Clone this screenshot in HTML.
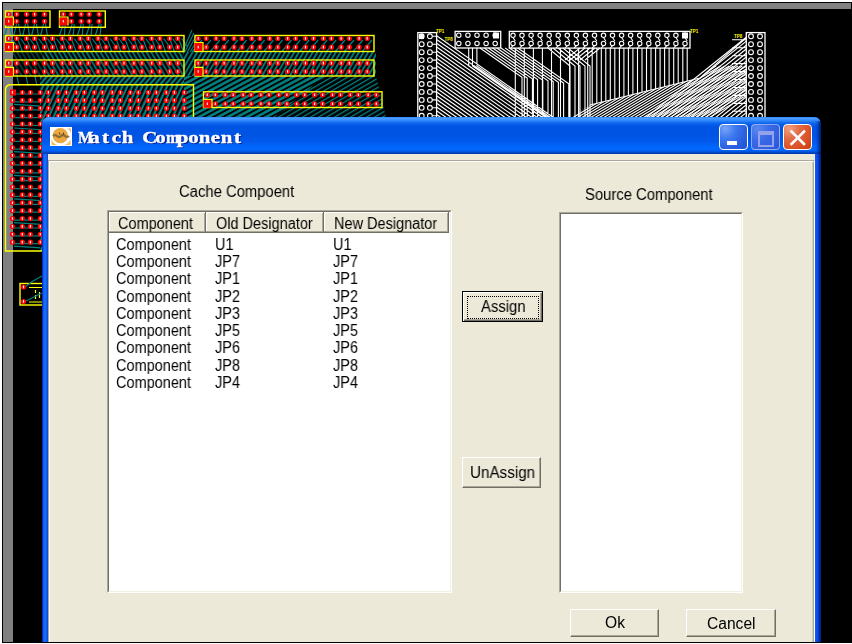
<!DOCTYPE html>
<html><head><meta charset="utf-8"><style>
html,body{margin:0;padding:0;}
body{width:852px;height:644px;position:relative;overflow:hidden;background:#fff;font-family:"Liberation Sans",sans-serif;}
#scr{position:absolute;left:2px;top:2px;width:850px;height:641px;background:#000;}
#clip{position:absolute;left:3px;top:3px;width:848px;height:639px;overflow:hidden;}
#clip>*{position:absolute;}
.p{position:absolute;}
.btn{box-sizing:border-box;background:#ece9d8;border-style:solid;border-width:1px;border-color:#fff #716f64 #716f64 #fff;box-shadow:inset -1px -1px 0 #aca899;}
.btn.def{border-color:#000;box-shadow:inset 1px 1px 0 #fff,inset -1px -1px 0 #716f64,inset -2px -2px 0 #aca899;}
.foc{position:absolute;box-sizing:border-box;border:1px dotted #000;}
.tb{box-sizing:border-box;border:1px solid #fff;border-radius:4px;}
.t{position:absolute;white-space:nowrap;line-height:1;color:#000;transform-origin:0 0;will-change:transform;}
</style></head><body>
<div id="scr"></div>
<div id="clip">
 <div style="left:-3px;top:-3px;width:852px;height:644px;">
  <div class="p" style="left:3px;top:3px;width:848px;height:6px;background:#808080"></div>
  <div class="p" style="left:3px;top:3px;width:10px;height:639px;background:#808080"></div>
  <svg class="p" style="left:0;top:0" width="852" height="644" viewBox="0 0 852 644"><defs><pattern id="hb" width="4" height="4" patternUnits="userSpaceOnUse" patternTransform="rotate(-30)"><rect width="4" height="4" fill="#000"/><rect width="1.8" height="4" fill="#008080"/></pattern>
<pattern id="hf" width="4" height="4" patternUnits="userSpaceOnUse" patternTransform="rotate(30)"><rect width="4" height="4" fill="#000"/><rect width="1.8" height="4" fill="#008080"/></pattern>
<pattern id="hf2" width="4.5" height="4.5" patternUnits="userSpaceOnUse" patternTransform="rotate(62)"><rect width="5" height="5" fill="#008080"/><rect width="1.9" height="5" fill="#000"/></pattern>
<pattern id="hf3" width="4" height="4" patternUnits="userSpaceOnUse" patternTransform="rotate(60)"><rect width="4" height="4" fill="#000"/><rect width="1.3" height="4" fill="#008080"/></pattern>
<pattern id="hs" width="4" height="4" patternUnits="userSpaceOnUse" patternTransform="rotate(40)"><rect width="4" height="4" fill="#000"/><rect width="2.2" height="4" fill="#008080"/></pattern>
<pattern id="hg" width="4.5" height="4.5" patternUnits="userSpaceOnUse" patternTransform="rotate(25)"><rect width="4.5" height="4.5" fill="#008080"/><rect width="2.3" height="4.5" fill="#000"/></pattern>
<pattern id="hw" width="4" height="4" patternUnits="userSpaceOnUse" patternTransform="rotate(-40)"><rect width="4" height="4" fill="#000"/><rect width="1.1" height="4" fill="#fff"/></pattern>
<pattern id="hw2" width="4" height="4" patternUnits="userSpaceOnUse" patternTransform="rotate(38)"><rect width="4" height="4" fill="#000"/><rect width="1.1" height="4" fill="#fff"/></pattern>
<clipPath id="pc"><rect x="3" y="9" width="848" height="633"/></clipPath></defs><g clip-path="url(#pc)"><path d="M9.7 24.0L11.7 36.0M7.7 24.0L4.7 36.0M18.6 24.0L20.6 36.0M16.6 24.0L13.6 36.0M27.6 24.0L29.6 36.0M25.6 24.0L22.6 36.0M36.5 24.0L38.5 36.0M34.5 24.0L31.5 36.0M45.5 24.0L47.5 36.0M43.5 24.0L40.5 36.0M63.3 24.0L59.3 36.0M65.3 24.0L64.3 36.0M72.2 24.0L68.2 36.0M74.2 24.0L73.2 36.0M81.2 24.0L77.2 36.0M83.2 24.0L82.2 36.0M90.1 24.0L86.1 36.0M92.1 24.0L91.1 36.0M99.1 24.0L95.1 36.0M101.1 24.0L100.1 36.0M8.7 38.5L13.7 52.0M11.7 38.5L17.7 47.0M17.6 38.5L22.6 52.0M20.6 38.5L26.6 47.0M26.6 38.5L31.6 52.0M29.6 38.5L35.6 47.0M35.5 38.5L40.5 52.0M38.5 38.5L44.5 47.0M44.5 38.5L49.5 52.0M47.5 38.5L53.5 47.0M53.4 38.5L58.4 52.0M56.4 38.5L62.4 47.0M62.3 38.5L67.3 52.0M65.3 38.5L71.3 47.0M71.3 38.5L76.3 52.0M74.3 38.5L80.3 47.0M80.2 38.5L85.2 52.0M83.2 38.5L89.2 47.0M89.2 38.5L94.2 52.0M92.2 38.5L98.2 47.0M98.1 38.5L103.1 52.0M101.1 38.5L107.1 47.0M107.0 38.5L112.0 52.0M110.0 38.5L116.0 47.0M116.0 38.5L121.0 52.0M119.0 38.5L125.0 47.0M124.9 38.5L129.9 52.0M127.9 38.5L133.9 47.0M133.9 38.5L138.9 52.0M136.9 38.5L142.9 47.0M142.8 38.5L147.8 52.0M145.8 38.5L151.8 47.0M151.7 38.5L156.7 52.0M154.7 38.5L160.7 47.0M160.7 38.5L165.7 52.0M163.7 38.5L169.7 47.0M169.6 38.5L174.6 52.0M172.6 38.5L178.6 47.0M178.6 38.5L183.6 52.0M181.6 38.5L187.6 47.0M202.0 40.0L192.0 52.0M210.9 40.0L200.9 52.0M219.9 40.0L209.9 52.0M228.8 40.0L218.8 52.0M237.8 40.0L227.8 52.0M246.7 40.0L236.7 52.0M255.6 40.0L245.6 52.0M264.6 40.0L254.6 52.0M273.5 40.0L263.5 52.0M282.5 40.0L272.5 52.0M291.4 40.0L281.4 52.0M300.3 40.0L290.3 52.0M309.3 40.0L299.3 52.0M318.2 40.0L308.2 52.0M327.2 40.0L317.2 52.0M336.1 40.0L326.1 52.0M345.0 40.0L335.0 52.0M354.0 40.0L344.0 52.0M362.9 40.0L352.9 52.0M371.9 40.0L361.9 52.0M192.0 30.0L178.0 62.0M194.0 33.0L180.0 62.0M196.0 36.0L182.0 62.0M198.0 39.0L184.0 62.0M200.0 42.0L186.0 62.0M202.0 45.0L188.0 62.0M13.0 94.0L45.0 94.0M13.0 101.9L45.0 101.9M14.0 104.4L45.0 106.4M13.0 109.8L45.0 109.8M13.0 117.6L45.0 117.6M13.0 125.5L45.0 125.5M14.0 128.0L45.0 130.0M13.0 133.4L45.0 133.4M13.0 141.3L45.0 141.3M13.0 149.2L45.0 149.2M14.0 151.7L45.0 153.7M13.0 157.0L45.0 157.0M13.0 164.9L45.0 164.9M13.0 172.8L45.0 172.8M14.0 175.3L45.0 177.3M13.0 180.7L45.0 180.7M13.0 188.6L45.0 188.6M13.0 196.4L45.0 196.4M14.0 198.9L45.0 200.9M13.0 204.3L45.0 204.3M13.0 212.2L45.0 212.2M13.0 220.1L45.0 220.1M14.0 222.6L45.0 224.6M13.0 228.0L45.0 228.0M13.0 235.8L45.0 235.8M13.0 243.7L45.0 243.7M14.0 246.2L45.0 248.2M17.0 76.0L19.0 86.0M26.0 76.0L28.0 86.0M35.0 76.0L37.0 86.0M44.0 76.0L46.0 86.0" stroke="#008080" stroke-width="1.2" fill="none"/><rect x="13" y="52" width="172" height="24" fill="url(#hb)" opacity="0.9"/><rect x="13" y="52" width="30" height="24" fill="#000" opacity="0.45"/><rect x="184" y="52" width="192" height="24" fill="url(#hf)"/><rect x="40" y="76" width="154" height="9" fill="url(#hs)"/><path d="M40 85 L194 85 L194 251 L40 251 Z" fill="url(#hg)"/><path d="M184 76 L325 76 L275 117 L184 117 Z" fill="url(#hf2)"/><path d="M325 76 L376 76 L386 117 L275 117 Z" fill="url(#hf3)"/><rect x="5.5" y="11" width="44.5" height="16.3" fill="none" stroke="#ffff00" stroke-width="1.4"/><rect x="59.5" y="11" width="45.8" height="16.3" fill="none" stroke="#ffff00" stroke-width="1.4"/><rect x="5.5" y="35.5" width="178.5" height="16.0" fill="none" stroke="#ffff00" stroke-width="1.4"/><rect x="195" y="35.5" width="179" height="16.0" fill="none" stroke="#ffff00" stroke-width="1.4"/><rect x="5.5" y="60" width="178.5" height="16" fill="none" stroke="#ffff00" stroke-width="1.4"/><rect x="195" y="60" width="179" height="16" fill="none" stroke="#ffff00" stroke-width="1.4"/><rect x="203.5" y="91.8" width="178.5" height="15.700000000000003" fill="none" stroke="#ffff00" stroke-width="1.4"/><path d="M5.5 251 L5.5 90 Q5.5 84.8 11 84.8 L193.5 84.8 L193.5 251 Z" fill="none" stroke="#ffff00" stroke-width="1.4"/><rect x="20" y="283.5" width="26" height="21.5" fill="none" stroke="#ffff00" stroke-width="1.4"/><path d="M29 287.5 H46 M29 302 H46 M35.5 290 v3 M35.5 295 v4 M39.5 292 v6" stroke="#ffff00" stroke-width="1.2" fill="none"/><path d="M25 287 L33 281 L42 276 M25 301.5 L46 291" stroke="#008080" stroke-width="1.1" fill="none"/><g fill="#ff0000"><circle cx="8.7" cy="14.3" r="2.6"/><circle cx="16.7" cy="14.3" r="2.6"/><circle cx="26.6" cy="14.3" r="2.6"/><circle cx="34.6" cy="14.3" r="2.6"/><circle cx="44.5" cy="14.3" r="2.6"/><circle cx="8.7" cy="21.3" r="2.6"/><circle cx="16.7" cy="21.3" r="2.6"/><circle cx="26.6" cy="21.3" r="2.6"/><circle cx="34.6" cy="21.3" r="2.6"/><circle cx="44.5" cy="21.3" r="2.6"/><circle cx="63.3" cy="14.3" r="2.6"/><circle cx="71.3" cy="14.3" r="2.6"/><circle cx="81.2" cy="14.3" r="2.6"/><circle cx="89.2" cy="14.3" r="2.6"/><circle cx="99.1" cy="14.3" r="2.6"/><circle cx="63.3" cy="21.3" r="2.6"/><circle cx="71.3" cy="21.3" r="2.6"/><circle cx="81.2" cy="21.3" r="2.6"/><circle cx="89.2" cy="21.3" r="2.6"/><circle cx="99.1" cy="21.3" r="2.6"/><circle cx="8.7" cy="38.5" r="2.6"/><circle cx="16.7" cy="38.5" r="2.6"/><circle cx="26.6" cy="38.5" r="2.6"/><circle cx="34.6" cy="38.5" r="2.6"/><circle cx="44.5" cy="38.5" r="2.6"/><circle cx="52.5" cy="38.5" r="2.6"/><circle cx="62.3" cy="38.5" r="2.6"/><circle cx="70.4" cy="38.5" r="2.6"/><circle cx="80.2" cy="38.5" r="2.6"/><circle cx="88.3" cy="38.5" r="2.6"/><circle cx="98.1" cy="38.5" r="2.6"/><circle cx="106.1" cy="38.5" r="2.6"/><circle cx="116.0" cy="38.5" r="2.6"/><circle cx="124.0" cy="38.5" r="2.6"/><circle cx="133.9" cy="38.5" r="2.6"/><circle cx="141.9" cy="38.5" r="2.6"/><circle cx="151.7" cy="38.5" r="2.6"/><circle cx="159.8" cy="38.5" r="2.6"/><circle cx="169.6" cy="38.5" r="2.6"/><circle cx="177.7" cy="38.5" r="2.6"/><circle cx="8.7" cy="47.2" r="2.6"/><circle cx="16.7" cy="47.2" r="2.6"/><circle cx="26.6" cy="47.2" r="2.6"/><circle cx="34.6" cy="47.2" r="2.6"/><circle cx="44.5" cy="47.2" r="2.6"/><circle cx="52.5" cy="47.2" r="2.6"/><circle cx="62.3" cy="47.2" r="2.6"/><circle cx="70.4" cy="47.2" r="2.6"/><circle cx="80.2" cy="47.2" r="2.6"/><circle cx="88.3" cy="47.2" r="2.6"/><circle cx="98.1" cy="47.2" r="2.6"/><circle cx="106.1" cy="47.2" r="2.6"/><circle cx="116.0" cy="47.2" r="2.6"/><circle cx="124.0" cy="47.2" r="2.6"/><circle cx="133.9" cy="47.2" r="2.6"/><circle cx="141.9" cy="47.2" r="2.6"/><circle cx="151.7" cy="47.2" r="2.6"/><circle cx="159.8" cy="47.2" r="2.6"/><circle cx="169.6" cy="47.2" r="2.6"/><circle cx="177.7" cy="47.2" r="2.6"/><circle cx="198.2" cy="38.5" r="2.6"/><circle cx="206.2" cy="38.5" r="2.6"/><circle cx="216.1" cy="38.5" r="2.6"/><circle cx="224.1" cy="38.5" r="2.6"/><circle cx="234.0" cy="38.5" r="2.6"/><circle cx="242.0" cy="38.5" r="2.6"/><circle cx="251.8" cy="38.5" r="2.6"/><circle cx="259.9" cy="38.5" r="2.6"/><circle cx="269.7" cy="38.5" r="2.6"/><circle cx="277.8" cy="38.5" r="2.6"/><circle cx="287.6" cy="38.5" r="2.6"/><circle cx="295.6" cy="38.5" r="2.6"/><circle cx="305.5" cy="38.5" r="2.6"/><circle cx="313.5" cy="38.5" r="2.6"/><circle cx="323.4" cy="38.5" r="2.6"/><circle cx="331.4" cy="38.5" r="2.6"/><circle cx="341.2" cy="38.5" r="2.6"/><circle cx="349.3" cy="38.5" r="2.6"/><circle cx="359.1" cy="38.5" r="2.6"/><circle cx="367.2" cy="38.5" r="2.6"/><circle cx="198.2" cy="47.2" r="2.6"/><circle cx="206.2" cy="47.2" r="2.6"/><circle cx="216.1" cy="47.2" r="2.6"/><circle cx="224.1" cy="47.2" r="2.6"/><circle cx="234.0" cy="47.2" r="2.6"/><circle cx="242.0" cy="47.2" r="2.6"/><circle cx="251.8" cy="47.2" r="2.6"/><circle cx="259.9" cy="47.2" r="2.6"/><circle cx="269.7" cy="47.2" r="2.6"/><circle cx="277.8" cy="47.2" r="2.6"/><circle cx="287.6" cy="47.2" r="2.6"/><circle cx="295.6" cy="47.2" r="2.6"/><circle cx="305.5" cy="47.2" r="2.6"/><circle cx="313.5" cy="47.2" r="2.6"/><circle cx="323.4" cy="47.2" r="2.6"/><circle cx="331.4" cy="47.2" r="2.6"/><circle cx="341.2" cy="47.2" r="2.6"/><circle cx="349.3" cy="47.2" r="2.6"/><circle cx="359.1" cy="47.2" r="2.6"/><circle cx="367.2" cy="47.2" r="2.6"/><circle cx="8.7" cy="63.2" r="2.6"/><circle cx="16.7" cy="63.2" r="2.6"/><circle cx="26.6" cy="63.2" r="2.6"/><circle cx="34.6" cy="63.2" r="2.6"/><circle cx="44.5" cy="63.2" r="2.6"/><circle cx="52.5" cy="63.2" r="2.6"/><circle cx="62.3" cy="63.2" r="2.6"/><circle cx="70.4" cy="63.2" r="2.6"/><circle cx="80.2" cy="63.2" r="2.6"/><circle cx="88.3" cy="63.2" r="2.6"/><circle cx="98.1" cy="63.2" r="2.6"/><circle cx="106.1" cy="63.2" r="2.6"/><circle cx="116.0" cy="63.2" r="2.6"/><circle cx="124.0" cy="63.2" r="2.6"/><circle cx="133.9" cy="63.2" r="2.6"/><circle cx="141.9" cy="63.2" r="2.6"/><circle cx="151.7" cy="63.2" r="2.6"/><circle cx="159.8" cy="63.2" r="2.6"/><circle cx="169.6" cy="63.2" r="2.6"/><circle cx="177.7" cy="63.2" r="2.6"/><circle cx="8.7" cy="71.6" r="2.6"/><circle cx="16.7" cy="71.6" r="2.6"/><circle cx="26.6" cy="71.6" r="2.6"/><circle cx="34.6" cy="71.6" r="2.6"/><circle cx="44.5" cy="71.6" r="2.6"/><circle cx="52.5" cy="71.6" r="2.6"/><circle cx="62.3" cy="71.6" r="2.6"/><circle cx="70.4" cy="71.6" r="2.6"/><circle cx="80.2" cy="71.6" r="2.6"/><circle cx="88.3" cy="71.6" r="2.6"/><circle cx="98.1" cy="71.6" r="2.6"/><circle cx="106.1" cy="71.6" r="2.6"/><circle cx="116.0" cy="71.6" r="2.6"/><circle cx="124.0" cy="71.6" r="2.6"/><circle cx="133.9" cy="71.6" r="2.6"/><circle cx="141.9" cy="71.6" r="2.6"/><circle cx="151.7" cy="71.6" r="2.6"/><circle cx="159.8" cy="71.6" r="2.6"/><circle cx="169.6" cy="71.6" r="2.6"/><circle cx="177.7" cy="71.6" r="2.6"/><circle cx="198.2" cy="63.2" r="2.6"/><circle cx="206.2" cy="63.2" r="2.6"/><circle cx="216.1" cy="63.2" r="2.6"/><circle cx="224.1" cy="63.2" r="2.6"/><circle cx="234.0" cy="63.2" r="2.6"/><circle cx="242.0" cy="63.2" r="2.6"/><circle cx="251.8" cy="63.2" r="2.6"/><circle cx="259.9" cy="63.2" r="2.6"/><circle cx="269.7" cy="63.2" r="2.6"/><circle cx="277.8" cy="63.2" r="2.6"/><circle cx="287.6" cy="63.2" r="2.6"/><circle cx="295.6" cy="63.2" r="2.6"/><circle cx="305.5" cy="63.2" r="2.6"/><circle cx="313.5" cy="63.2" r="2.6"/><circle cx="323.4" cy="63.2" r="2.6"/><circle cx="331.4" cy="63.2" r="2.6"/><circle cx="341.2" cy="63.2" r="2.6"/><circle cx="349.3" cy="63.2" r="2.6"/><circle cx="359.1" cy="63.2" r="2.6"/><circle cx="367.2" cy="63.2" r="2.6"/><circle cx="198.2" cy="71.6" r="2.6"/><circle cx="206.2" cy="71.6" r="2.6"/><circle cx="216.1" cy="71.6" r="2.6"/><circle cx="224.1" cy="71.6" r="2.6"/><circle cx="234.0" cy="71.6" r="2.6"/><circle cx="242.0" cy="71.6" r="2.6"/><circle cx="251.8" cy="71.6" r="2.6"/><circle cx="259.9" cy="71.6" r="2.6"/><circle cx="269.7" cy="71.6" r="2.6"/><circle cx="277.8" cy="71.6" r="2.6"/><circle cx="287.6" cy="71.6" r="2.6"/><circle cx="295.6" cy="71.6" r="2.6"/><circle cx="305.5" cy="71.6" r="2.6"/><circle cx="313.5" cy="71.6" r="2.6"/><circle cx="323.4" cy="71.6" r="2.6"/><circle cx="331.4" cy="71.6" r="2.6"/><circle cx="341.2" cy="71.6" r="2.6"/><circle cx="349.3" cy="71.6" r="2.6"/><circle cx="359.1" cy="71.6" r="2.6"/><circle cx="367.2" cy="71.6" r="2.6"/><circle cx="207.3" cy="94.8" r="2.6"/><circle cx="215.3" cy="94.8" r="2.6"/><circle cx="225.2" cy="94.8" r="2.6"/><circle cx="233.2" cy="94.8" r="2.6"/><circle cx="243.1" cy="94.8" r="2.6"/><circle cx="251.1" cy="94.8" r="2.6"/><circle cx="260.9" cy="94.8" r="2.6"/><circle cx="269.0" cy="94.8" r="2.6"/><circle cx="278.8" cy="94.8" r="2.6"/><circle cx="286.9" cy="94.8" r="2.6"/><circle cx="296.7" cy="94.8" r="2.6"/><circle cx="304.7" cy="94.8" r="2.6"/><circle cx="314.6" cy="94.8" r="2.6"/><circle cx="322.6" cy="94.8" r="2.6"/><circle cx="332.5" cy="94.8" r="2.6"/><circle cx="340.5" cy="94.8" r="2.6"/><circle cx="350.3" cy="94.8" r="2.6"/><circle cx="358.4" cy="94.8" r="2.6"/><circle cx="368.2" cy="94.8" r="2.6"/><circle cx="376.3" cy="94.8" r="2.6"/><circle cx="207.3" cy="103.8" r="2.6"/><circle cx="215.3" cy="103.8" r="2.6"/><circle cx="225.2" cy="103.8" r="2.6"/><circle cx="233.2" cy="103.8" r="2.6"/><circle cx="243.1" cy="103.8" r="2.6"/><circle cx="251.1" cy="103.8" r="2.6"/><circle cx="260.9" cy="103.8" r="2.6"/><circle cx="269.0" cy="103.8" r="2.6"/><circle cx="278.8" cy="103.8" r="2.6"/><circle cx="286.9" cy="103.8" r="2.6"/><circle cx="296.7" cy="103.8" r="2.6"/><circle cx="304.7" cy="103.8" r="2.6"/><circle cx="314.6" cy="103.8" r="2.6"/><circle cx="322.6" cy="103.8" r="2.6"/><circle cx="332.5" cy="103.8" r="2.6"/><circle cx="340.5" cy="103.8" r="2.6"/><circle cx="350.3" cy="103.8" r="2.6"/><circle cx="358.4" cy="103.8" r="2.6"/><circle cx="368.2" cy="103.8" r="2.6"/><circle cx="376.3" cy="103.8" r="2.6"/><circle cx="12.4" cy="92.5" r="2.6"/><circle cx="22.3" cy="92.5" r="2.6"/><circle cx="30.4" cy="92.5" r="2.6"/><circle cx="40.3" cy="92.5" r="2.6"/><circle cx="48.4" cy="92.5" r="2.6"/><circle cx="58.3" cy="92.5" r="2.6"/><circle cx="66.4" cy="92.5" r="2.6"/><circle cx="76.3" cy="92.5" r="2.6"/><circle cx="84.4" cy="92.5" r="2.6"/><circle cx="94.3" cy="92.5" r="2.6"/><circle cx="102.4" cy="92.5" r="2.6"/><circle cx="112.3" cy="92.5" r="2.6"/><circle cx="120.4" cy="92.5" r="2.6"/><circle cx="130.3" cy="92.5" r="2.6"/><circle cx="138.4" cy="92.5" r="2.6"/><circle cx="148.3" cy="92.5" r="2.6"/><circle cx="156.4" cy="92.5" r="2.6"/><circle cx="166.3" cy="92.5" r="2.6"/><circle cx="174.4" cy="92.5" r="2.6"/><circle cx="184.3" cy="92.5" r="2.6"/><circle cx="12.4" cy="100.4" r="2.6"/><circle cx="22.3" cy="100.4" r="2.6"/><circle cx="30.4" cy="100.4" r="2.6"/><circle cx="40.3" cy="100.4" r="2.6"/><circle cx="48.4" cy="100.4" r="2.6"/><circle cx="58.3" cy="100.4" r="2.6"/><circle cx="66.4" cy="100.4" r="2.6"/><circle cx="76.3" cy="100.4" r="2.6"/><circle cx="84.4" cy="100.4" r="2.6"/><circle cx="94.3" cy="100.4" r="2.6"/><circle cx="102.4" cy="100.4" r="2.6"/><circle cx="112.3" cy="100.4" r="2.6"/><circle cx="120.4" cy="100.4" r="2.6"/><circle cx="130.3" cy="100.4" r="2.6"/><circle cx="138.4" cy="100.4" r="2.6"/><circle cx="148.3" cy="100.4" r="2.6"/><circle cx="156.4" cy="100.4" r="2.6"/><circle cx="166.3" cy="100.4" r="2.6"/><circle cx="174.4" cy="100.4" r="2.6"/><circle cx="184.3" cy="100.4" r="2.6"/><circle cx="12.4" cy="108.3" r="2.6"/><circle cx="22.3" cy="108.3" r="2.6"/><circle cx="30.4" cy="108.3" r="2.6"/><circle cx="40.3" cy="108.3" r="2.6"/><circle cx="48.4" cy="108.3" r="2.6"/><circle cx="58.3" cy="108.3" r="2.6"/><circle cx="66.4" cy="108.3" r="2.6"/><circle cx="76.3" cy="108.3" r="2.6"/><circle cx="84.4" cy="108.3" r="2.6"/><circle cx="94.3" cy="108.3" r="2.6"/><circle cx="102.4" cy="108.3" r="2.6"/><circle cx="112.3" cy="108.3" r="2.6"/><circle cx="120.4" cy="108.3" r="2.6"/><circle cx="130.3" cy="108.3" r="2.6"/><circle cx="138.4" cy="108.3" r="2.6"/><circle cx="148.3" cy="108.3" r="2.6"/><circle cx="156.4" cy="108.3" r="2.6"/><circle cx="166.3" cy="108.3" r="2.6"/><circle cx="174.4" cy="108.3" r="2.6"/><circle cx="184.3" cy="108.3" r="2.6"/><circle cx="12.4" cy="116.1" r="2.6"/><circle cx="22.3" cy="116.1" r="2.6"/><circle cx="30.4" cy="116.1" r="2.6"/><circle cx="40.3" cy="116.1" r="2.6"/><circle cx="48.4" cy="116.1" r="2.6"/><circle cx="58.3" cy="116.1" r="2.6"/><circle cx="66.4" cy="116.1" r="2.6"/><circle cx="76.3" cy="116.1" r="2.6"/><circle cx="84.4" cy="116.1" r="2.6"/><circle cx="94.3" cy="116.1" r="2.6"/><circle cx="102.4" cy="116.1" r="2.6"/><circle cx="112.3" cy="116.1" r="2.6"/><circle cx="120.4" cy="116.1" r="2.6"/><circle cx="130.3" cy="116.1" r="2.6"/><circle cx="138.4" cy="116.1" r="2.6"/><circle cx="148.3" cy="116.1" r="2.6"/><circle cx="156.4" cy="116.1" r="2.6"/><circle cx="166.3" cy="116.1" r="2.6"/><circle cx="174.4" cy="116.1" r="2.6"/><circle cx="184.3" cy="116.1" r="2.6"/><circle cx="12.4" cy="124.0" r="2.6"/><circle cx="22.3" cy="124.0" r="2.6"/><circle cx="30.4" cy="124.0" r="2.6"/><circle cx="40.3" cy="124.0" r="2.6"/><circle cx="48.4" cy="124.0" r="2.6"/><circle cx="58.3" cy="124.0" r="2.6"/><circle cx="66.4" cy="124.0" r="2.6"/><circle cx="76.3" cy="124.0" r="2.6"/><circle cx="84.4" cy="124.0" r="2.6"/><circle cx="94.3" cy="124.0" r="2.6"/><circle cx="102.4" cy="124.0" r="2.6"/><circle cx="112.3" cy="124.0" r="2.6"/><circle cx="120.4" cy="124.0" r="2.6"/><circle cx="130.3" cy="124.0" r="2.6"/><circle cx="138.4" cy="124.0" r="2.6"/><circle cx="148.3" cy="124.0" r="2.6"/><circle cx="156.4" cy="124.0" r="2.6"/><circle cx="166.3" cy="124.0" r="2.6"/><circle cx="174.4" cy="124.0" r="2.6"/><circle cx="184.3" cy="124.0" r="2.6"/><circle cx="12.4" cy="131.9" r="2.6"/><circle cx="22.3" cy="131.9" r="2.6"/><circle cx="30.4" cy="131.9" r="2.6"/><circle cx="40.3" cy="131.9" r="2.6"/><circle cx="48.4" cy="131.9" r="2.6"/><circle cx="58.3" cy="131.9" r="2.6"/><circle cx="66.4" cy="131.9" r="2.6"/><circle cx="76.3" cy="131.9" r="2.6"/><circle cx="84.4" cy="131.9" r="2.6"/><circle cx="94.3" cy="131.9" r="2.6"/><circle cx="102.4" cy="131.9" r="2.6"/><circle cx="112.3" cy="131.9" r="2.6"/><circle cx="120.4" cy="131.9" r="2.6"/><circle cx="130.3" cy="131.9" r="2.6"/><circle cx="138.4" cy="131.9" r="2.6"/><circle cx="148.3" cy="131.9" r="2.6"/><circle cx="156.4" cy="131.9" r="2.6"/><circle cx="166.3" cy="131.9" r="2.6"/><circle cx="174.4" cy="131.9" r="2.6"/><circle cx="184.3" cy="131.9" r="2.6"/><circle cx="12.4" cy="139.8" r="2.6"/><circle cx="22.3" cy="139.8" r="2.6"/><circle cx="30.4" cy="139.8" r="2.6"/><circle cx="40.3" cy="139.8" r="2.6"/><circle cx="48.4" cy="139.8" r="2.6"/><circle cx="58.3" cy="139.8" r="2.6"/><circle cx="66.4" cy="139.8" r="2.6"/><circle cx="76.3" cy="139.8" r="2.6"/><circle cx="84.4" cy="139.8" r="2.6"/><circle cx="94.3" cy="139.8" r="2.6"/><circle cx="102.4" cy="139.8" r="2.6"/><circle cx="112.3" cy="139.8" r="2.6"/><circle cx="120.4" cy="139.8" r="2.6"/><circle cx="130.3" cy="139.8" r="2.6"/><circle cx="138.4" cy="139.8" r="2.6"/><circle cx="148.3" cy="139.8" r="2.6"/><circle cx="156.4" cy="139.8" r="2.6"/><circle cx="166.3" cy="139.8" r="2.6"/><circle cx="174.4" cy="139.8" r="2.6"/><circle cx="184.3" cy="139.8" r="2.6"/><circle cx="12.4" cy="147.7" r="2.6"/><circle cx="22.3" cy="147.7" r="2.6"/><circle cx="30.4" cy="147.7" r="2.6"/><circle cx="40.3" cy="147.7" r="2.6"/><circle cx="48.4" cy="147.7" r="2.6"/><circle cx="58.3" cy="147.7" r="2.6"/><circle cx="66.4" cy="147.7" r="2.6"/><circle cx="76.3" cy="147.7" r="2.6"/><circle cx="84.4" cy="147.7" r="2.6"/><circle cx="94.3" cy="147.7" r="2.6"/><circle cx="102.4" cy="147.7" r="2.6"/><circle cx="112.3" cy="147.7" r="2.6"/><circle cx="120.4" cy="147.7" r="2.6"/><circle cx="130.3" cy="147.7" r="2.6"/><circle cx="138.4" cy="147.7" r="2.6"/><circle cx="148.3" cy="147.7" r="2.6"/><circle cx="156.4" cy="147.7" r="2.6"/><circle cx="166.3" cy="147.7" r="2.6"/><circle cx="174.4" cy="147.7" r="2.6"/><circle cx="184.3" cy="147.7" r="2.6"/><circle cx="12.4" cy="155.5" r="2.6"/><circle cx="22.3" cy="155.5" r="2.6"/><circle cx="30.4" cy="155.5" r="2.6"/><circle cx="40.3" cy="155.5" r="2.6"/><circle cx="48.4" cy="155.5" r="2.6"/><circle cx="58.3" cy="155.5" r="2.6"/><circle cx="66.4" cy="155.5" r="2.6"/><circle cx="76.3" cy="155.5" r="2.6"/><circle cx="84.4" cy="155.5" r="2.6"/><circle cx="94.3" cy="155.5" r="2.6"/><circle cx="102.4" cy="155.5" r="2.6"/><circle cx="112.3" cy="155.5" r="2.6"/><circle cx="120.4" cy="155.5" r="2.6"/><circle cx="130.3" cy="155.5" r="2.6"/><circle cx="138.4" cy="155.5" r="2.6"/><circle cx="148.3" cy="155.5" r="2.6"/><circle cx="156.4" cy="155.5" r="2.6"/><circle cx="166.3" cy="155.5" r="2.6"/><circle cx="174.4" cy="155.5" r="2.6"/><circle cx="184.3" cy="155.5" r="2.6"/><circle cx="12.4" cy="163.4" r="2.6"/><circle cx="22.3" cy="163.4" r="2.6"/><circle cx="30.4" cy="163.4" r="2.6"/><circle cx="40.3" cy="163.4" r="2.6"/><circle cx="48.4" cy="163.4" r="2.6"/><circle cx="58.3" cy="163.4" r="2.6"/><circle cx="66.4" cy="163.4" r="2.6"/><circle cx="76.3" cy="163.4" r="2.6"/><circle cx="84.4" cy="163.4" r="2.6"/><circle cx="94.3" cy="163.4" r="2.6"/><circle cx="102.4" cy="163.4" r="2.6"/><circle cx="112.3" cy="163.4" r="2.6"/><circle cx="120.4" cy="163.4" r="2.6"/><circle cx="130.3" cy="163.4" r="2.6"/><circle cx="138.4" cy="163.4" r="2.6"/><circle cx="148.3" cy="163.4" r="2.6"/><circle cx="156.4" cy="163.4" r="2.6"/><circle cx="166.3" cy="163.4" r="2.6"/><circle cx="174.4" cy="163.4" r="2.6"/><circle cx="184.3" cy="163.4" r="2.6"/><circle cx="12.4" cy="171.3" r="2.6"/><circle cx="22.3" cy="171.3" r="2.6"/><circle cx="30.4" cy="171.3" r="2.6"/><circle cx="40.3" cy="171.3" r="2.6"/><circle cx="48.4" cy="171.3" r="2.6"/><circle cx="58.3" cy="171.3" r="2.6"/><circle cx="66.4" cy="171.3" r="2.6"/><circle cx="76.3" cy="171.3" r="2.6"/><circle cx="84.4" cy="171.3" r="2.6"/><circle cx="94.3" cy="171.3" r="2.6"/><circle cx="102.4" cy="171.3" r="2.6"/><circle cx="112.3" cy="171.3" r="2.6"/><circle cx="120.4" cy="171.3" r="2.6"/><circle cx="130.3" cy="171.3" r="2.6"/><circle cx="138.4" cy="171.3" r="2.6"/><circle cx="148.3" cy="171.3" r="2.6"/><circle cx="156.4" cy="171.3" r="2.6"/><circle cx="166.3" cy="171.3" r="2.6"/><circle cx="174.4" cy="171.3" r="2.6"/><circle cx="184.3" cy="171.3" r="2.6"/><circle cx="12.4" cy="179.2" r="2.6"/><circle cx="22.3" cy="179.2" r="2.6"/><circle cx="30.4" cy="179.2" r="2.6"/><circle cx="40.3" cy="179.2" r="2.6"/><circle cx="48.4" cy="179.2" r="2.6"/><circle cx="58.3" cy="179.2" r="2.6"/><circle cx="66.4" cy="179.2" r="2.6"/><circle cx="76.3" cy="179.2" r="2.6"/><circle cx="84.4" cy="179.2" r="2.6"/><circle cx="94.3" cy="179.2" r="2.6"/><circle cx="102.4" cy="179.2" r="2.6"/><circle cx="112.3" cy="179.2" r="2.6"/><circle cx="120.4" cy="179.2" r="2.6"/><circle cx="130.3" cy="179.2" r="2.6"/><circle cx="138.4" cy="179.2" r="2.6"/><circle cx="148.3" cy="179.2" r="2.6"/><circle cx="156.4" cy="179.2" r="2.6"/><circle cx="166.3" cy="179.2" r="2.6"/><circle cx="174.4" cy="179.2" r="2.6"/><circle cx="184.3" cy="179.2" r="2.6"/><circle cx="12.4" cy="187.1" r="2.6"/><circle cx="22.3" cy="187.1" r="2.6"/><circle cx="30.4" cy="187.1" r="2.6"/><circle cx="40.3" cy="187.1" r="2.6"/><circle cx="48.4" cy="187.1" r="2.6"/><circle cx="58.3" cy="187.1" r="2.6"/><circle cx="66.4" cy="187.1" r="2.6"/><circle cx="76.3" cy="187.1" r="2.6"/><circle cx="84.4" cy="187.1" r="2.6"/><circle cx="94.3" cy="187.1" r="2.6"/><circle cx="102.4" cy="187.1" r="2.6"/><circle cx="112.3" cy="187.1" r="2.6"/><circle cx="120.4" cy="187.1" r="2.6"/><circle cx="130.3" cy="187.1" r="2.6"/><circle cx="138.4" cy="187.1" r="2.6"/><circle cx="148.3" cy="187.1" r="2.6"/><circle cx="156.4" cy="187.1" r="2.6"/><circle cx="166.3" cy="187.1" r="2.6"/><circle cx="174.4" cy="187.1" r="2.6"/><circle cx="184.3" cy="187.1" r="2.6"/><circle cx="12.4" cy="194.9" r="2.6"/><circle cx="22.3" cy="194.9" r="2.6"/><circle cx="30.4" cy="194.9" r="2.6"/><circle cx="40.3" cy="194.9" r="2.6"/><circle cx="48.4" cy="194.9" r="2.6"/><circle cx="58.3" cy="194.9" r="2.6"/><circle cx="66.4" cy="194.9" r="2.6"/><circle cx="76.3" cy="194.9" r="2.6"/><circle cx="84.4" cy="194.9" r="2.6"/><circle cx="94.3" cy="194.9" r="2.6"/><circle cx="102.4" cy="194.9" r="2.6"/><circle cx="112.3" cy="194.9" r="2.6"/><circle cx="120.4" cy="194.9" r="2.6"/><circle cx="130.3" cy="194.9" r="2.6"/><circle cx="138.4" cy="194.9" r="2.6"/><circle cx="148.3" cy="194.9" r="2.6"/><circle cx="156.4" cy="194.9" r="2.6"/><circle cx="166.3" cy="194.9" r="2.6"/><circle cx="174.4" cy="194.9" r="2.6"/><circle cx="184.3" cy="194.9" r="2.6"/><circle cx="12.4" cy="202.8" r="2.6"/><circle cx="22.3" cy="202.8" r="2.6"/><circle cx="30.4" cy="202.8" r="2.6"/><circle cx="40.3" cy="202.8" r="2.6"/><circle cx="48.4" cy="202.8" r="2.6"/><circle cx="58.3" cy="202.8" r="2.6"/><circle cx="66.4" cy="202.8" r="2.6"/><circle cx="76.3" cy="202.8" r="2.6"/><circle cx="84.4" cy="202.8" r="2.6"/><circle cx="94.3" cy="202.8" r="2.6"/><circle cx="102.4" cy="202.8" r="2.6"/><circle cx="112.3" cy="202.8" r="2.6"/><circle cx="120.4" cy="202.8" r="2.6"/><circle cx="130.3" cy="202.8" r="2.6"/><circle cx="138.4" cy="202.8" r="2.6"/><circle cx="148.3" cy="202.8" r="2.6"/><circle cx="156.4" cy="202.8" r="2.6"/><circle cx="166.3" cy="202.8" r="2.6"/><circle cx="174.4" cy="202.8" r="2.6"/><circle cx="184.3" cy="202.8" r="2.6"/><circle cx="12.4" cy="210.7" r="2.6"/><circle cx="22.3" cy="210.7" r="2.6"/><circle cx="30.4" cy="210.7" r="2.6"/><circle cx="40.3" cy="210.7" r="2.6"/><circle cx="48.4" cy="210.7" r="2.6"/><circle cx="58.3" cy="210.7" r="2.6"/><circle cx="66.4" cy="210.7" r="2.6"/><circle cx="76.3" cy="210.7" r="2.6"/><circle cx="84.4" cy="210.7" r="2.6"/><circle cx="94.3" cy="210.7" r="2.6"/><circle cx="102.4" cy="210.7" r="2.6"/><circle cx="112.3" cy="210.7" r="2.6"/><circle cx="120.4" cy="210.7" r="2.6"/><circle cx="130.3" cy="210.7" r="2.6"/><circle cx="138.4" cy="210.7" r="2.6"/><circle cx="148.3" cy="210.7" r="2.6"/><circle cx="156.4" cy="210.7" r="2.6"/><circle cx="166.3" cy="210.7" r="2.6"/><circle cx="174.4" cy="210.7" r="2.6"/><circle cx="184.3" cy="210.7" r="2.6"/><circle cx="12.4" cy="218.6" r="2.6"/><circle cx="22.3" cy="218.6" r="2.6"/><circle cx="30.4" cy="218.6" r="2.6"/><circle cx="40.3" cy="218.6" r="2.6"/><circle cx="48.4" cy="218.6" r="2.6"/><circle cx="58.3" cy="218.6" r="2.6"/><circle cx="66.4" cy="218.6" r="2.6"/><circle cx="76.3" cy="218.6" r="2.6"/><circle cx="84.4" cy="218.6" r="2.6"/><circle cx="94.3" cy="218.6" r="2.6"/><circle cx="102.4" cy="218.6" r="2.6"/><circle cx="112.3" cy="218.6" r="2.6"/><circle cx="120.4" cy="218.6" r="2.6"/><circle cx="130.3" cy="218.6" r="2.6"/><circle cx="138.4" cy="218.6" r="2.6"/><circle cx="148.3" cy="218.6" r="2.6"/><circle cx="156.4" cy="218.6" r="2.6"/><circle cx="166.3" cy="218.6" r="2.6"/><circle cx="174.4" cy="218.6" r="2.6"/><circle cx="184.3" cy="218.6" r="2.6"/><circle cx="12.4" cy="226.5" r="2.6"/><circle cx="22.3" cy="226.5" r="2.6"/><circle cx="30.4" cy="226.5" r="2.6"/><circle cx="40.3" cy="226.5" r="2.6"/><circle cx="48.4" cy="226.5" r="2.6"/><circle cx="58.3" cy="226.5" r="2.6"/><circle cx="66.4" cy="226.5" r="2.6"/><circle cx="76.3" cy="226.5" r="2.6"/><circle cx="84.4" cy="226.5" r="2.6"/><circle cx="94.3" cy="226.5" r="2.6"/><circle cx="102.4" cy="226.5" r="2.6"/><circle cx="112.3" cy="226.5" r="2.6"/><circle cx="120.4" cy="226.5" r="2.6"/><circle cx="130.3" cy="226.5" r="2.6"/><circle cx="138.4" cy="226.5" r="2.6"/><circle cx="148.3" cy="226.5" r="2.6"/><circle cx="156.4" cy="226.5" r="2.6"/><circle cx="166.3" cy="226.5" r="2.6"/><circle cx="174.4" cy="226.5" r="2.6"/><circle cx="184.3" cy="226.5" r="2.6"/><circle cx="12.4" cy="234.3" r="2.6"/><circle cx="22.3" cy="234.3" r="2.6"/><circle cx="30.4" cy="234.3" r="2.6"/><circle cx="40.3" cy="234.3" r="2.6"/><circle cx="48.4" cy="234.3" r="2.6"/><circle cx="58.3" cy="234.3" r="2.6"/><circle cx="66.4" cy="234.3" r="2.6"/><circle cx="76.3" cy="234.3" r="2.6"/><circle cx="84.4" cy="234.3" r="2.6"/><circle cx="94.3" cy="234.3" r="2.6"/><circle cx="102.4" cy="234.3" r="2.6"/><circle cx="112.3" cy="234.3" r="2.6"/><circle cx="120.4" cy="234.3" r="2.6"/><circle cx="130.3" cy="234.3" r="2.6"/><circle cx="138.4" cy="234.3" r="2.6"/><circle cx="148.3" cy="234.3" r="2.6"/><circle cx="156.4" cy="234.3" r="2.6"/><circle cx="166.3" cy="234.3" r="2.6"/><circle cx="174.4" cy="234.3" r="2.6"/><circle cx="184.3" cy="234.3" r="2.6"/><circle cx="12.4" cy="242.2" r="2.6"/><circle cx="22.3" cy="242.2" r="2.6"/><circle cx="30.4" cy="242.2" r="2.6"/><circle cx="40.3" cy="242.2" r="2.6"/><circle cx="48.4" cy="242.2" r="2.6"/><circle cx="58.3" cy="242.2" r="2.6"/><circle cx="66.4" cy="242.2" r="2.6"/><circle cx="76.3" cy="242.2" r="2.6"/><circle cx="84.4" cy="242.2" r="2.6"/><circle cx="94.3" cy="242.2" r="2.6"/><circle cx="102.4" cy="242.2" r="2.6"/><circle cx="112.3" cy="242.2" r="2.6"/><circle cx="120.4" cy="242.2" r="2.6"/><circle cx="130.3" cy="242.2" r="2.6"/><circle cx="138.4" cy="242.2" r="2.6"/><circle cx="148.3" cy="242.2" r="2.6"/><circle cx="156.4" cy="242.2" r="2.6"/><circle cx="166.3" cy="242.2" r="2.6"/><circle cx="174.4" cy="242.2" r="2.6"/><circle cx="184.3" cy="242.2" r="2.6"/><circle cx="23.5" cy="287.0" r="2.6"/><circle cx="23.5" cy="301.5" r="2.6"/></g><rect x="5.0" y="17.5" width="8" height="8" fill="#ff0000"/><path d="M5.0 17.0h8.5v8.5" fill="none" stroke="#ffff00" stroke-width="1.2"/><rect x="59.5" y="17.5" width="8" height="8" fill="#ff0000"/><path d="M59.5 17.0h8.5v8.5" fill="none" stroke="#ffff00" stroke-width="1.2"/><rect x="5.0" y="43.0" width="8" height="8" fill="#ff0000"/><path d="M5.0 42.5h8.5v8.5" fill="none" stroke="#ffff00" stroke-width="1.2"/><rect x="194.5" y="43.0" width="8" height="8" fill="#ff0000"/><path d="M194.5 42.5h8.5v8.5" fill="none" stroke="#ffff00" stroke-width="1.2"/><rect x="5.0" y="67.8" width="8" height="8" fill="#ff0000"/><path d="M5.0 67.3h8.5v8.5" fill="none" stroke="#ffff00" stroke-width="1.2"/><rect x="194.5" y="67.8" width="8" height="8" fill="#ff0000"/><path d="M194.5 67.3h8.5v8.5" fill="none" stroke="#ffff00" stroke-width="1.2"/><rect x="203.5" y="99.8" width="8" height="8" fill="#ff0000"/><path d="M203.5 99.3h8.5v8.5" fill="none" stroke="#ffff00" stroke-width="1.2"/><rect x="10" y="89.5" width="6" height="6" fill="#ff0000"/><path d="M8.1 12.9h1.2v2.6h-1.2zM16.1 12.9h1.2v2.6h-1.2zM26.0 12.9h1.2v2.6h-1.2zM34.0 12.9h1.2v2.6h-1.2zM43.9 12.9h1.2v2.6h-1.2zM8.1 19.9h1.2v2.6h-1.2zM16.1 19.9h1.2v2.6h-1.2zM26.0 19.9h1.2v2.6h-1.2zM34.0 19.9h1.2v2.6h-1.2zM43.9 19.9h1.2v2.6h-1.2zM62.7 12.9h1.2v2.6h-1.2zM70.7 12.9h1.2v2.6h-1.2zM80.6 12.9h1.2v2.6h-1.2zM88.6 12.9h1.2v2.6h-1.2zM98.5 12.9h1.2v2.6h-1.2zM62.7 19.9h1.2v2.6h-1.2zM70.7 19.9h1.2v2.6h-1.2zM80.6 19.9h1.2v2.6h-1.2zM88.6 19.9h1.2v2.6h-1.2zM98.5 19.9h1.2v2.6h-1.2zM8.1 37.1h1.2v2.6h-1.2zM16.1 37.1h1.2v2.6h-1.2zM26.0 37.1h1.2v2.6h-1.2zM34.0 37.1h1.2v2.6h-1.2zM43.9 37.1h1.2v2.6h-1.2zM51.9 37.1h1.2v2.6h-1.2zM61.7 37.1h1.2v2.6h-1.2zM69.8 37.1h1.2v2.6h-1.2zM79.6 37.1h1.2v2.6h-1.2zM87.7 37.1h1.2v2.6h-1.2zM97.5 37.1h1.2v2.6h-1.2zM105.5 37.1h1.2v2.6h-1.2zM115.4 37.1h1.2v2.6h-1.2zM123.4 37.1h1.2v2.6h-1.2zM133.3 37.1h1.2v2.6h-1.2zM141.3 37.1h1.2v2.6h-1.2zM151.1 37.1h1.2v2.6h-1.2zM159.2 37.1h1.2v2.6h-1.2zM169.0 37.1h1.2v2.6h-1.2zM177.1 37.1h1.2v2.6h-1.2zM8.1 45.8h1.2v2.6h-1.2zM16.1 45.8h1.2v2.6h-1.2zM26.0 45.8h1.2v2.6h-1.2zM34.0 45.8h1.2v2.6h-1.2zM43.9 45.8h1.2v2.6h-1.2zM51.9 45.8h1.2v2.6h-1.2zM61.7 45.8h1.2v2.6h-1.2zM69.8 45.8h1.2v2.6h-1.2zM79.6 45.8h1.2v2.6h-1.2zM87.7 45.8h1.2v2.6h-1.2zM97.5 45.8h1.2v2.6h-1.2zM105.5 45.8h1.2v2.6h-1.2zM115.4 45.8h1.2v2.6h-1.2zM123.4 45.8h1.2v2.6h-1.2zM133.3 45.8h1.2v2.6h-1.2zM141.3 45.8h1.2v2.6h-1.2zM151.1 45.8h1.2v2.6h-1.2zM159.2 45.8h1.2v2.6h-1.2zM169.0 45.8h1.2v2.6h-1.2zM177.1 45.8h1.2v2.6h-1.2zM197.6 37.1h1.2v2.6h-1.2zM205.6 37.1h1.2v2.6h-1.2zM215.5 37.1h1.2v2.6h-1.2zM223.5 37.1h1.2v2.6h-1.2zM233.4 37.1h1.2v2.6h-1.2zM241.4 37.1h1.2v2.6h-1.2zM251.2 37.1h1.2v2.6h-1.2zM259.3 37.1h1.2v2.6h-1.2zM269.1 37.1h1.2v2.6h-1.2zM277.2 37.1h1.2v2.6h-1.2zM287.0 37.1h1.2v2.6h-1.2zM295.0 37.1h1.2v2.6h-1.2zM304.9 37.1h1.2v2.6h-1.2zM312.9 37.1h1.2v2.6h-1.2zM322.8 37.1h1.2v2.6h-1.2zM330.8 37.1h1.2v2.6h-1.2zM340.6 37.1h1.2v2.6h-1.2zM348.7 37.1h1.2v2.6h-1.2zM358.5 37.1h1.2v2.6h-1.2zM366.6 37.1h1.2v2.6h-1.2zM197.6 45.8h1.2v2.6h-1.2zM205.6 45.8h1.2v2.6h-1.2zM215.5 45.8h1.2v2.6h-1.2zM223.5 45.8h1.2v2.6h-1.2zM233.4 45.8h1.2v2.6h-1.2zM241.4 45.8h1.2v2.6h-1.2zM251.2 45.8h1.2v2.6h-1.2zM259.3 45.8h1.2v2.6h-1.2zM269.1 45.8h1.2v2.6h-1.2zM277.2 45.8h1.2v2.6h-1.2zM287.0 45.8h1.2v2.6h-1.2zM295.0 45.8h1.2v2.6h-1.2zM304.9 45.8h1.2v2.6h-1.2zM312.9 45.8h1.2v2.6h-1.2zM322.8 45.8h1.2v2.6h-1.2zM330.8 45.8h1.2v2.6h-1.2zM340.6 45.8h1.2v2.6h-1.2zM348.7 45.8h1.2v2.6h-1.2zM358.5 45.8h1.2v2.6h-1.2zM366.6 45.8h1.2v2.6h-1.2zM8.1 61.8h1.2v2.6h-1.2zM16.1 61.8h1.2v2.6h-1.2zM26.0 61.8h1.2v2.6h-1.2zM34.0 61.8h1.2v2.6h-1.2zM43.9 61.8h1.2v2.6h-1.2zM51.9 61.8h1.2v2.6h-1.2zM61.7 61.8h1.2v2.6h-1.2zM69.8 61.8h1.2v2.6h-1.2zM79.6 61.8h1.2v2.6h-1.2zM87.7 61.8h1.2v2.6h-1.2zM97.5 61.8h1.2v2.6h-1.2zM105.5 61.8h1.2v2.6h-1.2zM115.4 61.8h1.2v2.6h-1.2zM123.4 61.8h1.2v2.6h-1.2zM133.3 61.8h1.2v2.6h-1.2zM141.3 61.8h1.2v2.6h-1.2zM151.1 61.8h1.2v2.6h-1.2zM159.2 61.8h1.2v2.6h-1.2zM169.0 61.8h1.2v2.6h-1.2zM177.1 61.8h1.2v2.6h-1.2zM8.1 70.2h1.2v2.6h-1.2zM16.1 70.2h1.2v2.6h-1.2zM26.0 70.2h1.2v2.6h-1.2zM34.0 70.2h1.2v2.6h-1.2zM43.9 70.2h1.2v2.6h-1.2zM51.9 70.2h1.2v2.6h-1.2zM61.7 70.2h1.2v2.6h-1.2zM69.8 70.2h1.2v2.6h-1.2zM79.6 70.2h1.2v2.6h-1.2zM87.7 70.2h1.2v2.6h-1.2zM97.5 70.2h1.2v2.6h-1.2zM105.5 70.2h1.2v2.6h-1.2zM115.4 70.2h1.2v2.6h-1.2zM123.4 70.2h1.2v2.6h-1.2zM133.3 70.2h1.2v2.6h-1.2zM141.3 70.2h1.2v2.6h-1.2zM151.1 70.2h1.2v2.6h-1.2zM159.2 70.2h1.2v2.6h-1.2zM169.0 70.2h1.2v2.6h-1.2zM177.1 70.2h1.2v2.6h-1.2zM197.6 61.8h1.2v2.6h-1.2zM205.6 61.8h1.2v2.6h-1.2zM215.5 61.8h1.2v2.6h-1.2zM223.5 61.8h1.2v2.6h-1.2zM233.4 61.8h1.2v2.6h-1.2zM241.4 61.8h1.2v2.6h-1.2zM251.2 61.8h1.2v2.6h-1.2zM259.3 61.8h1.2v2.6h-1.2zM269.1 61.8h1.2v2.6h-1.2zM277.2 61.8h1.2v2.6h-1.2zM287.0 61.8h1.2v2.6h-1.2zM295.0 61.8h1.2v2.6h-1.2zM304.9 61.8h1.2v2.6h-1.2zM312.9 61.8h1.2v2.6h-1.2zM322.8 61.8h1.2v2.6h-1.2zM330.8 61.8h1.2v2.6h-1.2zM340.6 61.8h1.2v2.6h-1.2zM348.7 61.8h1.2v2.6h-1.2zM358.5 61.8h1.2v2.6h-1.2zM366.6 61.8h1.2v2.6h-1.2zM197.6 70.2h1.2v2.6h-1.2zM205.6 70.2h1.2v2.6h-1.2zM215.5 70.2h1.2v2.6h-1.2zM223.5 70.2h1.2v2.6h-1.2zM233.4 70.2h1.2v2.6h-1.2zM241.4 70.2h1.2v2.6h-1.2zM251.2 70.2h1.2v2.6h-1.2zM259.3 70.2h1.2v2.6h-1.2zM269.1 70.2h1.2v2.6h-1.2zM277.2 70.2h1.2v2.6h-1.2zM287.0 70.2h1.2v2.6h-1.2zM295.0 70.2h1.2v2.6h-1.2zM304.9 70.2h1.2v2.6h-1.2zM312.9 70.2h1.2v2.6h-1.2zM322.8 70.2h1.2v2.6h-1.2zM330.8 70.2h1.2v2.6h-1.2zM340.6 70.2h1.2v2.6h-1.2zM348.7 70.2h1.2v2.6h-1.2zM358.5 70.2h1.2v2.6h-1.2zM366.6 70.2h1.2v2.6h-1.2zM206.7 93.4h1.2v2.6h-1.2zM214.7 93.4h1.2v2.6h-1.2zM224.6 93.4h1.2v2.6h-1.2zM232.6 93.4h1.2v2.6h-1.2zM242.5 93.4h1.2v2.6h-1.2zM250.5 93.4h1.2v2.6h-1.2zM260.3 93.4h1.2v2.6h-1.2zM268.4 93.4h1.2v2.6h-1.2zM278.2 93.4h1.2v2.6h-1.2zM286.3 93.4h1.2v2.6h-1.2zM296.1 93.4h1.2v2.6h-1.2zM304.1 93.4h1.2v2.6h-1.2zM314.0 93.4h1.2v2.6h-1.2zM322.0 93.4h1.2v2.6h-1.2zM331.9 93.4h1.2v2.6h-1.2zM339.9 93.4h1.2v2.6h-1.2zM349.7 93.4h1.2v2.6h-1.2zM357.8 93.4h1.2v2.6h-1.2zM367.6 93.4h1.2v2.6h-1.2zM375.7 93.4h1.2v2.6h-1.2zM206.7 102.4h1.2v2.6h-1.2zM214.7 102.4h1.2v2.6h-1.2zM224.6 102.4h1.2v2.6h-1.2zM232.6 102.4h1.2v2.6h-1.2zM242.5 102.4h1.2v2.6h-1.2zM250.5 102.4h1.2v2.6h-1.2zM260.3 102.4h1.2v2.6h-1.2zM268.4 102.4h1.2v2.6h-1.2zM278.2 102.4h1.2v2.6h-1.2zM286.3 102.4h1.2v2.6h-1.2zM296.1 102.4h1.2v2.6h-1.2zM304.1 102.4h1.2v2.6h-1.2zM314.0 102.4h1.2v2.6h-1.2zM322.0 102.4h1.2v2.6h-1.2zM331.9 102.4h1.2v2.6h-1.2zM339.9 102.4h1.2v2.6h-1.2zM349.7 102.4h1.2v2.6h-1.2zM357.8 102.4h1.2v2.6h-1.2zM367.6 102.4h1.2v2.6h-1.2zM375.7 102.4h1.2v2.6h-1.2zM11.8 91.1h1.2v2.6h-1.2zM21.7 91.1h1.2v2.6h-1.2zM29.8 91.1h1.2v2.6h-1.2zM39.7 91.1h1.2v2.6h-1.2zM47.8 91.1h1.2v2.6h-1.2zM57.7 91.1h1.2v2.6h-1.2zM65.8 91.1h1.2v2.6h-1.2zM75.7 91.1h1.2v2.6h-1.2zM83.8 91.1h1.2v2.6h-1.2zM93.7 91.1h1.2v2.6h-1.2zM101.8 91.1h1.2v2.6h-1.2zM111.7 91.1h1.2v2.6h-1.2zM119.8 91.1h1.2v2.6h-1.2zM129.7 91.1h1.2v2.6h-1.2zM137.8 91.1h1.2v2.6h-1.2zM147.7 91.1h1.2v2.6h-1.2zM155.8 91.1h1.2v2.6h-1.2zM165.7 91.1h1.2v2.6h-1.2zM173.8 91.1h1.2v2.6h-1.2zM183.7 91.1h1.2v2.6h-1.2zM11.8 99.0h1.2v2.6h-1.2zM21.7 99.0h1.2v2.6h-1.2zM29.8 99.0h1.2v2.6h-1.2zM39.7 99.0h1.2v2.6h-1.2zM47.8 99.0h1.2v2.6h-1.2zM57.7 99.0h1.2v2.6h-1.2zM65.8 99.0h1.2v2.6h-1.2zM75.7 99.0h1.2v2.6h-1.2zM83.8 99.0h1.2v2.6h-1.2zM93.7 99.0h1.2v2.6h-1.2zM101.8 99.0h1.2v2.6h-1.2zM111.7 99.0h1.2v2.6h-1.2zM119.8 99.0h1.2v2.6h-1.2zM129.7 99.0h1.2v2.6h-1.2zM137.8 99.0h1.2v2.6h-1.2zM147.7 99.0h1.2v2.6h-1.2zM155.8 99.0h1.2v2.6h-1.2zM165.7 99.0h1.2v2.6h-1.2zM173.8 99.0h1.2v2.6h-1.2zM183.7 99.0h1.2v2.6h-1.2zM11.8 106.9h1.2v2.6h-1.2zM21.7 106.9h1.2v2.6h-1.2zM29.8 106.9h1.2v2.6h-1.2zM39.7 106.9h1.2v2.6h-1.2zM47.8 106.9h1.2v2.6h-1.2zM57.7 106.9h1.2v2.6h-1.2zM65.8 106.9h1.2v2.6h-1.2zM75.7 106.9h1.2v2.6h-1.2zM83.8 106.9h1.2v2.6h-1.2zM93.7 106.9h1.2v2.6h-1.2zM101.8 106.9h1.2v2.6h-1.2zM111.7 106.9h1.2v2.6h-1.2zM119.8 106.9h1.2v2.6h-1.2zM129.7 106.9h1.2v2.6h-1.2zM137.8 106.9h1.2v2.6h-1.2zM147.7 106.9h1.2v2.6h-1.2zM155.8 106.9h1.2v2.6h-1.2zM165.7 106.9h1.2v2.6h-1.2zM173.8 106.9h1.2v2.6h-1.2zM183.7 106.9h1.2v2.6h-1.2zM11.8 114.7h1.2v2.6h-1.2zM21.7 114.7h1.2v2.6h-1.2zM29.8 114.7h1.2v2.6h-1.2zM39.7 114.7h1.2v2.6h-1.2zM47.8 114.7h1.2v2.6h-1.2zM57.7 114.7h1.2v2.6h-1.2zM65.8 114.7h1.2v2.6h-1.2zM75.7 114.7h1.2v2.6h-1.2zM83.8 114.7h1.2v2.6h-1.2zM93.7 114.7h1.2v2.6h-1.2zM101.8 114.7h1.2v2.6h-1.2zM111.7 114.7h1.2v2.6h-1.2zM119.8 114.7h1.2v2.6h-1.2zM129.7 114.7h1.2v2.6h-1.2zM137.8 114.7h1.2v2.6h-1.2zM147.7 114.7h1.2v2.6h-1.2zM155.8 114.7h1.2v2.6h-1.2zM165.7 114.7h1.2v2.6h-1.2zM173.8 114.7h1.2v2.6h-1.2zM183.7 114.7h1.2v2.6h-1.2zM11.8 122.6h1.2v2.6h-1.2zM21.7 122.6h1.2v2.6h-1.2zM29.8 122.6h1.2v2.6h-1.2zM39.7 122.6h1.2v2.6h-1.2zM47.8 122.6h1.2v2.6h-1.2zM57.7 122.6h1.2v2.6h-1.2zM65.8 122.6h1.2v2.6h-1.2zM75.7 122.6h1.2v2.6h-1.2zM83.8 122.6h1.2v2.6h-1.2zM93.7 122.6h1.2v2.6h-1.2zM101.8 122.6h1.2v2.6h-1.2zM111.7 122.6h1.2v2.6h-1.2zM119.8 122.6h1.2v2.6h-1.2zM129.7 122.6h1.2v2.6h-1.2zM137.8 122.6h1.2v2.6h-1.2zM147.7 122.6h1.2v2.6h-1.2zM155.8 122.6h1.2v2.6h-1.2zM165.7 122.6h1.2v2.6h-1.2zM173.8 122.6h1.2v2.6h-1.2zM183.7 122.6h1.2v2.6h-1.2zM11.8 130.5h1.2v2.6h-1.2zM21.7 130.5h1.2v2.6h-1.2zM29.8 130.5h1.2v2.6h-1.2zM39.7 130.5h1.2v2.6h-1.2zM47.8 130.5h1.2v2.6h-1.2zM57.7 130.5h1.2v2.6h-1.2zM65.8 130.5h1.2v2.6h-1.2zM75.7 130.5h1.2v2.6h-1.2zM83.8 130.5h1.2v2.6h-1.2zM93.7 130.5h1.2v2.6h-1.2zM101.8 130.5h1.2v2.6h-1.2zM111.7 130.5h1.2v2.6h-1.2zM119.8 130.5h1.2v2.6h-1.2zM129.7 130.5h1.2v2.6h-1.2zM137.8 130.5h1.2v2.6h-1.2zM147.7 130.5h1.2v2.6h-1.2zM155.8 130.5h1.2v2.6h-1.2zM165.7 130.5h1.2v2.6h-1.2zM173.8 130.5h1.2v2.6h-1.2zM183.7 130.5h1.2v2.6h-1.2zM11.8 138.4h1.2v2.6h-1.2zM21.7 138.4h1.2v2.6h-1.2zM29.8 138.4h1.2v2.6h-1.2zM39.7 138.4h1.2v2.6h-1.2zM47.8 138.4h1.2v2.6h-1.2zM57.7 138.4h1.2v2.6h-1.2zM65.8 138.4h1.2v2.6h-1.2zM75.7 138.4h1.2v2.6h-1.2zM83.8 138.4h1.2v2.6h-1.2zM93.7 138.4h1.2v2.6h-1.2zM101.8 138.4h1.2v2.6h-1.2zM111.7 138.4h1.2v2.6h-1.2zM119.8 138.4h1.2v2.6h-1.2zM129.7 138.4h1.2v2.6h-1.2zM137.8 138.4h1.2v2.6h-1.2zM147.7 138.4h1.2v2.6h-1.2zM155.8 138.4h1.2v2.6h-1.2zM165.7 138.4h1.2v2.6h-1.2zM173.8 138.4h1.2v2.6h-1.2zM183.7 138.4h1.2v2.6h-1.2zM11.8 146.3h1.2v2.6h-1.2zM21.7 146.3h1.2v2.6h-1.2zM29.8 146.3h1.2v2.6h-1.2zM39.7 146.3h1.2v2.6h-1.2zM47.8 146.3h1.2v2.6h-1.2zM57.7 146.3h1.2v2.6h-1.2zM65.8 146.3h1.2v2.6h-1.2zM75.7 146.3h1.2v2.6h-1.2zM83.8 146.3h1.2v2.6h-1.2zM93.7 146.3h1.2v2.6h-1.2zM101.8 146.3h1.2v2.6h-1.2zM111.7 146.3h1.2v2.6h-1.2zM119.8 146.3h1.2v2.6h-1.2zM129.7 146.3h1.2v2.6h-1.2zM137.8 146.3h1.2v2.6h-1.2zM147.7 146.3h1.2v2.6h-1.2zM155.8 146.3h1.2v2.6h-1.2zM165.7 146.3h1.2v2.6h-1.2zM173.8 146.3h1.2v2.6h-1.2zM183.7 146.3h1.2v2.6h-1.2zM11.8 154.1h1.2v2.6h-1.2zM21.7 154.1h1.2v2.6h-1.2zM29.8 154.1h1.2v2.6h-1.2zM39.7 154.1h1.2v2.6h-1.2zM47.8 154.1h1.2v2.6h-1.2zM57.7 154.1h1.2v2.6h-1.2zM65.8 154.1h1.2v2.6h-1.2zM75.7 154.1h1.2v2.6h-1.2zM83.8 154.1h1.2v2.6h-1.2zM93.7 154.1h1.2v2.6h-1.2zM101.8 154.1h1.2v2.6h-1.2zM111.7 154.1h1.2v2.6h-1.2zM119.8 154.1h1.2v2.6h-1.2zM129.7 154.1h1.2v2.6h-1.2zM137.8 154.1h1.2v2.6h-1.2zM147.7 154.1h1.2v2.6h-1.2zM155.8 154.1h1.2v2.6h-1.2zM165.7 154.1h1.2v2.6h-1.2zM173.8 154.1h1.2v2.6h-1.2zM183.7 154.1h1.2v2.6h-1.2zM11.8 162.0h1.2v2.6h-1.2zM21.7 162.0h1.2v2.6h-1.2zM29.8 162.0h1.2v2.6h-1.2zM39.7 162.0h1.2v2.6h-1.2zM47.8 162.0h1.2v2.6h-1.2zM57.7 162.0h1.2v2.6h-1.2zM65.8 162.0h1.2v2.6h-1.2zM75.7 162.0h1.2v2.6h-1.2zM83.8 162.0h1.2v2.6h-1.2zM93.7 162.0h1.2v2.6h-1.2zM101.8 162.0h1.2v2.6h-1.2zM111.7 162.0h1.2v2.6h-1.2zM119.8 162.0h1.2v2.6h-1.2zM129.7 162.0h1.2v2.6h-1.2zM137.8 162.0h1.2v2.6h-1.2zM147.7 162.0h1.2v2.6h-1.2zM155.8 162.0h1.2v2.6h-1.2zM165.7 162.0h1.2v2.6h-1.2zM173.8 162.0h1.2v2.6h-1.2zM183.7 162.0h1.2v2.6h-1.2zM11.8 169.9h1.2v2.6h-1.2zM21.7 169.9h1.2v2.6h-1.2zM29.8 169.9h1.2v2.6h-1.2zM39.7 169.9h1.2v2.6h-1.2zM47.8 169.9h1.2v2.6h-1.2zM57.7 169.9h1.2v2.6h-1.2zM65.8 169.9h1.2v2.6h-1.2zM75.7 169.9h1.2v2.6h-1.2zM83.8 169.9h1.2v2.6h-1.2zM93.7 169.9h1.2v2.6h-1.2zM101.8 169.9h1.2v2.6h-1.2zM111.7 169.9h1.2v2.6h-1.2zM119.8 169.9h1.2v2.6h-1.2zM129.7 169.9h1.2v2.6h-1.2zM137.8 169.9h1.2v2.6h-1.2zM147.7 169.9h1.2v2.6h-1.2zM155.8 169.9h1.2v2.6h-1.2zM165.7 169.9h1.2v2.6h-1.2zM173.8 169.9h1.2v2.6h-1.2zM183.7 169.9h1.2v2.6h-1.2zM11.8 177.8h1.2v2.6h-1.2zM21.7 177.8h1.2v2.6h-1.2zM29.8 177.8h1.2v2.6h-1.2zM39.7 177.8h1.2v2.6h-1.2zM47.8 177.8h1.2v2.6h-1.2zM57.7 177.8h1.2v2.6h-1.2zM65.8 177.8h1.2v2.6h-1.2zM75.7 177.8h1.2v2.6h-1.2zM83.8 177.8h1.2v2.6h-1.2zM93.7 177.8h1.2v2.6h-1.2zM101.8 177.8h1.2v2.6h-1.2zM111.7 177.8h1.2v2.6h-1.2zM119.8 177.8h1.2v2.6h-1.2zM129.7 177.8h1.2v2.6h-1.2zM137.8 177.8h1.2v2.6h-1.2zM147.7 177.8h1.2v2.6h-1.2zM155.8 177.8h1.2v2.6h-1.2zM165.7 177.8h1.2v2.6h-1.2zM173.8 177.8h1.2v2.6h-1.2zM183.7 177.8h1.2v2.6h-1.2zM11.8 185.7h1.2v2.6h-1.2zM21.7 185.7h1.2v2.6h-1.2zM29.8 185.7h1.2v2.6h-1.2zM39.7 185.7h1.2v2.6h-1.2zM47.8 185.7h1.2v2.6h-1.2zM57.7 185.7h1.2v2.6h-1.2zM65.8 185.7h1.2v2.6h-1.2zM75.7 185.7h1.2v2.6h-1.2zM83.8 185.7h1.2v2.6h-1.2zM93.7 185.7h1.2v2.6h-1.2zM101.8 185.7h1.2v2.6h-1.2zM111.7 185.7h1.2v2.6h-1.2zM119.8 185.7h1.2v2.6h-1.2zM129.7 185.7h1.2v2.6h-1.2zM137.8 185.7h1.2v2.6h-1.2zM147.7 185.7h1.2v2.6h-1.2zM155.8 185.7h1.2v2.6h-1.2zM165.7 185.7h1.2v2.6h-1.2zM173.8 185.7h1.2v2.6h-1.2zM183.7 185.7h1.2v2.6h-1.2zM11.8 193.5h1.2v2.6h-1.2zM21.7 193.5h1.2v2.6h-1.2zM29.8 193.5h1.2v2.6h-1.2zM39.7 193.5h1.2v2.6h-1.2zM47.8 193.5h1.2v2.6h-1.2zM57.7 193.5h1.2v2.6h-1.2zM65.8 193.5h1.2v2.6h-1.2zM75.7 193.5h1.2v2.6h-1.2zM83.8 193.5h1.2v2.6h-1.2zM93.7 193.5h1.2v2.6h-1.2zM101.8 193.5h1.2v2.6h-1.2zM111.7 193.5h1.2v2.6h-1.2zM119.8 193.5h1.2v2.6h-1.2zM129.7 193.5h1.2v2.6h-1.2zM137.8 193.5h1.2v2.6h-1.2zM147.7 193.5h1.2v2.6h-1.2zM155.8 193.5h1.2v2.6h-1.2zM165.7 193.5h1.2v2.6h-1.2zM173.8 193.5h1.2v2.6h-1.2zM183.7 193.5h1.2v2.6h-1.2zM11.8 201.4h1.2v2.6h-1.2zM21.7 201.4h1.2v2.6h-1.2zM29.8 201.4h1.2v2.6h-1.2zM39.7 201.4h1.2v2.6h-1.2zM47.8 201.4h1.2v2.6h-1.2zM57.7 201.4h1.2v2.6h-1.2zM65.8 201.4h1.2v2.6h-1.2zM75.7 201.4h1.2v2.6h-1.2zM83.8 201.4h1.2v2.6h-1.2zM93.7 201.4h1.2v2.6h-1.2zM101.8 201.4h1.2v2.6h-1.2zM111.7 201.4h1.2v2.6h-1.2zM119.8 201.4h1.2v2.6h-1.2zM129.7 201.4h1.2v2.6h-1.2zM137.8 201.4h1.2v2.6h-1.2zM147.7 201.4h1.2v2.6h-1.2zM155.8 201.4h1.2v2.6h-1.2zM165.7 201.4h1.2v2.6h-1.2zM173.8 201.4h1.2v2.6h-1.2zM183.7 201.4h1.2v2.6h-1.2zM11.8 209.3h1.2v2.6h-1.2zM21.7 209.3h1.2v2.6h-1.2zM29.8 209.3h1.2v2.6h-1.2zM39.7 209.3h1.2v2.6h-1.2zM47.8 209.3h1.2v2.6h-1.2zM57.7 209.3h1.2v2.6h-1.2zM65.8 209.3h1.2v2.6h-1.2zM75.7 209.3h1.2v2.6h-1.2zM83.8 209.3h1.2v2.6h-1.2zM93.7 209.3h1.2v2.6h-1.2zM101.8 209.3h1.2v2.6h-1.2zM111.7 209.3h1.2v2.6h-1.2zM119.8 209.3h1.2v2.6h-1.2zM129.7 209.3h1.2v2.6h-1.2zM137.8 209.3h1.2v2.6h-1.2zM147.7 209.3h1.2v2.6h-1.2zM155.8 209.3h1.2v2.6h-1.2zM165.7 209.3h1.2v2.6h-1.2zM173.8 209.3h1.2v2.6h-1.2zM183.7 209.3h1.2v2.6h-1.2zM11.8 217.2h1.2v2.6h-1.2zM21.7 217.2h1.2v2.6h-1.2zM29.8 217.2h1.2v2.6h-1.2zM39.7 217.2h1.2v2.6h-1.2zM47.8 217.2h1.2v2.6h-1.2zM57.7 217.2h1.2v2.6h-1.2zM65.8 217.2h1.2v2.6h-1.2zM75.7 217.2h1.2v2.6h-1.2zM83.8 217.2h1.2v2.6h-1.2zM93.7 217.2h1.2v2.6h-1.2zM101.8 217.2h1.2v2.6h-1.2zM111.7 217.2h1.2v2.6h-1.2zM119.8 217.2h1.2v2.6h-1.2zM129.7 217.2h1.2v2.6h-1.2zM137.8 217.2h1.2v2.6h-1.2zM147.7 217.2h1.2v2.6h-1.2zM155.8 217.2h1.2v2.6h-1.2zM165.7 217.2h1.2v2.6h-1.2zM173.8 217.2h1.2v2.6h-1.2zM183.7 217.2h1.2v2.6h-1.2zM11.8 225.1h1.2v2.6h-1.2zM21.7 225.1h1.2v2.6h-1.2zM29.8 225.1h1.2v2.6h-1.2zM39.7 225.1h1.2v2.6h-1.2zM47.8 225.1h1.2v2.6h-1.2zM57.7 225.1h1.2v2.6h-1.2zM65.8 225.1h1.2v2.6h-1.2zM75.7 225.1h1.2v2.6h-1.2zM83.8 225.1h1.2v2.6h-1.2zM93.7 225.1h1.2v2.6h-1.2zM101.8 225.1h1.2v2.6h-1.2zM111.7 225.1h1.2v2.6h-1.2zM119.8 225.1h1.2v2.6h-1.2zM129.7 225.1h1.2v2.6h-1.2zM137.8 225.1h1.2v2.6h-1.2zM147.7 225.1h1.2v2.6h-1.2zM155.8 225.1h1.2v2.6h-1.2zM165.7 225.1h1.2v2.6h-1.2zM173.8 225.1h1.2v2.6h-1.2zM183.7 225.1h1.2v2.6h-1.2zM11.8 232.9h1.2v2.6h-1.2zM21.7 232.9h1.2v2.6h-1.2zM29.8 232.9h1.2v2.6h-1.2zM39.7 232.9h1.2v2.6h-1.2zM47.8 232.9h1.2v2.6h-1.2zM57.7 232.9h1.2v2.6h-1.2zM65.8 232.9h1.2v2.6h-1.2zM75.7 232.9h1.2v2.6h-1.2zM83.8 232.9h1.2v2.6h-1.2zM93.7 232.9h1.2v2.6h-1.2zM101.8 232.9h1.2v2.6h-1.2zM111.7 232.9h1.2v2.6h-1.2zM119.8 232.9h1.2v2.6h-1.2zM129.7 232.9h1.2v2.6h-1.2zM137.8 232.9h1.2v2.6h-1.2zM147.7 232.9h1.2v2.6h-1.2zM155.8 232.9h1.2v2.6h-1.2zM165.7 232.9h1.2v2.6h-1.2zM173.8 232.9h1.2v2.6h-1.2zM183.7 232.9h1.2v2.6h-1.2zM11.8 240.8h1.2v2.6h-1.2zM21.7 240.8h1.2v2.6h-1.2zM29.8 240.8h1.2v2.6h-1.2zM39.7 240.8h1.2v2.6h-1.2zM47.8 240.8h1.2v2.6h-1.2zM57.7 240.8h1.2v2.6h-1.2zM65.8 240.8h1.2v2.6h-1.2zM75.7 240.8h1.2v2.6h-1.2zM83.8 240.8h1.2v2.6h-1.2zM93.7 240.8h1.2v2.6h-1.2zM101.8 240.8h1.2v2.6h-1.2zM111.7 240.8h1.2v2.6h-1.2zM119.8 240.8h1.2v2.6h-1.2zM129.7 240.8h1.2v2.6h-1.2zM137.8 240.8h1.2v2.6h-1.2zM147.7 240.8h1.2v2.6h-1.2zM155.8 240.8h1.2v2.6h-1.2zM165.7 240.8h1.2v2.6h-1.2zM173.8 240.8h1.2v2.6h-1.2zM183.7 240.8h1.2v2.6h-1.2zM22.9 285.6h1.2v2.6h-1.2zM22.9 300.1h1.2v2.6h-1.2z" fill="#f4e8f0"/><rect x="417.8" y="32.6" width="18.8" height="100" fill="none" stroke="#ffffff" stroke-width="1.3"/><rect x="455.1" y="31.4" width="45.6" height="16.6" fill="none" stroke="#ffffff" stroke-width="1.3"/><rect x="509.3" y="31.4" width="180.7" height="16.7" fill="none" stroke="#ffffff" stroke-width="1.3"/><clipPath id="bandc"><path d="M570 118 L590 105 L700 78 L746 38 L746 118 Z"/></clipPath><path clip-path="url(#bandc)" d="M560.0 120L650.0 66.0M564.4 120L654.4 66.0M568.8 120L658.8 66.0M573.2 120L663.2 66.0M577.6 120L667.6 66.0M582.0 120L672.0 66.0M586.4 120L676.4 66.0M590.8 120L680.8 66.0M595.2 120L685.2 66.0M599.6 120L689.6 66.0M604.0 120L694.0 66.0M608.4 120L698.4 66.0M612.8 120L702.8 66.0M617.2 120L707.2 66.0M621.6 120L711.6 66.0M626.0 120L716.0 66.0M630.4 120L720.4 66.0M634.8 120L724.8 66.0M639.2 120L729.2 66.0M643.6 120L733.6 66.0M648.0 120L738.0 66.0M652.4 120L742.4 66.0M656.8 120L746.8 66.0M661.2 120L751.2 66.0M665.6 120L755.6 66.0M670.0 120L760.0 66.0M674.4 120L764.4 66.0M678.8 120L768.8 66.0M683.2 120L773.2 66.0M687.6 120L777.6 66.0M692.0 120L782.0 66.0M696.4 120L786.4 66.0M700.8 120L790.8 66.0M705.2 120L795.2 66.0" stroke="#ffffff" stroke-width="1.1" fill="none"/><path d="M590 105 L700 78 L746 38" stroke="#ffffff" stroke-width="1.1" fill="none"/><rect x="746.3" y="32.6" width="18.7" height="100" fill="none" stroke="#ffffff" stroke-width="1.3"/><path d="M429.9 36.3L437.0 36.3M429.9 44.2L437.0 44.2M429.9 52.2L437.0 52.2M429.9 60.1L437.0 60.1M429.9 68.1L437.0 68.1M429.9 76.0L437.0 76.0M429.9 84.0L437.0 84.0M429.9 91.9L437.0 91.9M429.9 99.9L437.0 99.9M429.9 107.8L437.0 107.8M429.9 115.8L437.0 115.8M437.0 36.0L554.1 118.0M437.0 39.8L548.8 118.0M437.0 43.5L543.4 118.0M437.0 47.2L538.1 118.0M437.0 51.0L532.7 118.0M437.0 54.8L527.4 118.0M437.0 58.5L522.0 118.0M437.0 62.2L516.6 118.0M437.0 66.0L511.3 118.0M437.0 69.8L505.9 118.0M437.0 73.5L500.6 118.0M437.0 77.2L495.2 118.0M437.0 81.0L489.9 118.0M437.0 84.8L484.5 118.0M437.0 88.5L479.1 118.0M437.0 92.2L473.8 118.0M437.0 96.0L468.4 118.0M437.0 99.8L463.1 118.0M437.0 103.5L457.7 118.0M437.0 107.2L452.4 118.0M437.0 111.0L447.0 118.0M437.0 114.8L441.6 118.0M468.7 48.0L468.7 66.0L543.0 118.0M472.5 48.0L472.5 66.0L546.8 118.0M476.9 48.0L476.9 66.0L551.2 118.0M480.0 48.0L522.0 77.4L522.0 118.0M484.2 48.0L527.2 78.1L527.2 118.0M488.4 48.0L532.4 78.8L532.4 118.0M492.6 48.0L537.6 79.5L537.6 118.0M496.8 48.0L542.8 80.2L542.8 118.0M501.0 48.0L548.0 80.9L548.0 118.0M505.2 48.0L553.2 81.6L553.2 118.0M509.4 48.0L558.4 82.3L558.4 118.0M513.6 48.0L563.6 83.0L563.6 118.0M517.8 48.0L568.8 83.7L568.8 118.0M513.0 37.5L515.3 41.0M510.8 48.0L513.0 45.6M515.3 48.0L515.3 118.0M522.0 37.5L524.3 41.0M519.8 48.0L522.0 45.6M524.3 48.0L524.3 118.0M531.1 37.5L533.4 41.0M528.9 48.0L531.1 45.6M533.4 48.0L533.4 118.0M540.1 37.5L542.4 41.0M537.9 48.0L540.1 45.6M542.4 48.0L542.4 118.0M549.2 37.5L551.5 41.0M547.0 48.0L549.2 45.6M551.5 48.0L551.5 118.0M558.2 37.5L560.5 41.0M556.0 48.0L558.2 45.6M560.5 48.0L560.5 118.0M567.3 37.5L569.6 41.0M565.1 48.0L567.3 45.6M569.6 48.0L569.6 118.0M576.4 37.5L578.6 41.0M574.1 48.0L576.4 45.6M578.6 48.0L578.6 118.0M585.4 37.5L587.7 41.0M583.2 48.0L585.4 45.6M587.7 48.0L587.7 118.0M594.5 37.5L596.8 41.0M592.2 48.0L594.5 45.6M596.8 48.0L596.8 103.3M592.2 48.0L592.2 104.4M603.5 37.5L605.8 41.0M601.3 48.0L603.5 45.6M605.8 48.0L605.8 101.1M601.3 48.0L601.3 102.2M612.5 37.5L614.8 41.0M610.3 48.0L612.5 45.6M614.8 48.0L614.8 98.9M610.3 48.0L610.3 100.0M621.6 37.5L623.9 41.0M619.4 48.0L621.6 45.6M623.9 48.0L623.9 96.7M619.4 48.0L619.4 97.8M630.6 37.5L632.9 41.0M628.4 48.0L630.6 45.6M632.9 48.0L632.9 94.5M628.4 48.0L628.4 95.6M639.7 37.5L642.0 41.0M637.5 48.0L639.7 45.6M642.0 48.0L642.0 92.2M637.5 48.0L637.5 93.3M648.8 37.5L651.0 41.0M646.5 48.0L648.8 45.6M651.0 48.0L651.0 90.0M646.5 48.0L646.5 91.1M657.8 37.5L660.1 41.0M655.6 48.0L657.8 45.6M660.1 48.0L660.1 87.8M655.6 48.0L655.6 88.9M666.9 37.5L669.1 41.0M664.6 48.0L666.9 45.6M669.1 48.0L669.1 85.6M664.6 48.0L664.6 86.7M675.9 37.5L678.2 41.0M673.7 48.0L675.9 45.6M678.2 48.0L678.2 83.4M673.7 48.0L673.7 84.5M685.0 37.5L687.2 41.0M682.8 48.0L685.0 45.6M687.2 48.0L687.2 81.1M682.8 48.0L682.8 82.2M548.0 48.0L570.0 66.0L570.0 118.0M600.0 48.0L585.0 60.0M553.0 48.0L575.0 66.0L575.0 118.0M595.0 48.0L580.0 60.0M558.0 48.0L580.0 66.0L580.0 118.0M590.0 48.0L575.0 60.0M563.0 48.0L585.0 66.0L585.0 118.0M585.0 48.0L570.0 60.0M568.0 48.0L590.0 66.0L590.0 118.0M580.0 48.0L565.0 60.0M746.3 39.8L732.0 39.8M746.3 37.3L645.4 118.0M746.3 41.1L650.2 118.0M746.3 47.8L732.0 47.8M746.3 45.2L655.4 118.0M746.3 49.0L660.1 118.0M746.3 55.7L732.0 55.7M746.3 53.2L665.3 118.0M746.3 57.0L670.0 118.0M746.3 63.6L732.0 63.6M746.3 61.1L675.2 118.0M746.3 65.0L680.0 118.0M746.3 71.6L732.0 71.6M746.3 69.1L685.2 118.0M746.3 72.9L689.9 118.0M746.3 79.5L732.0 79.5M746.3 77.0L695.1 118.0M746.3 80.8L699.9 118.0M746.3 87.5L732.0 87.5M746.3 85.0L705.0 118.0M746.3 88.8L709.8 118.0M746.3 95.4L732.0 95.4M746.3 92.9L715.0 118.0M746.3 96.7L719.7 118.0M746.3 103.4L732.0 103.4M746.3 100.9L724.9 118.0M746.3 104.7L729.7 118.0M746.3 111.3L732.0 111.3M746.3 108.8L734.9 118.0M746.3 112.6L739.6 118.0M746.3 119.3L732.0 119.3M746.3 116.8L744.8 118.0M746.3 120.6L749.5 118.0" stroke="#ffffff" stroke-width="1.1" fill="none"/><g fill="#000" stroke="#ffffff" stroke-width="1.1"><circle cx="421.7" cy="36.3" r="2.4"/><circle cx="429.9" cy="36.3" r="2.4"/><circle cx="421.7" cy="44.2" r="2.4"/><circle cx="429.9" cy="44.2" r="2.4"/><circle cx="421.7" cy="52.2" r="2.4"/><circle cx="429.9" cy="52.2" r="2.4"/><circle cx="421.7" cy="60.1" r="2.4"/><circle cx="429.9" cy="60.1" r="2.4"/><circle cx="421.7" cy="68.1" r="2.4"/><circle cx="429.9" cy="68.1" r="2.4"/><circle cx="421.7" cy="76.0" r="2.4"/><circle cx="429.9" cy="76.0" r="2.4"/><circle cx="421.7" cy="84.0" r="2.4"/><circle cx="429.9" cy="84.0" r="2.4"/><circle cx="421.7" cy="91.9" r="2.4"/><circle cx="429.9" cy="91.9" r="2.4"/><circle cx="421.7" cy="99.9" r="2.4"/><circle cx="429.9" cy="99.9" r="2.4"/><circle cx="421.7" cy="107.8" r="2.4"/><circle cx="429.9" cy="107.8" r="2.4"/><circle cx="421.7" cy="115.8" r="2.4"/><circle cx="429.9" cy="115.8" r="2.4"/><circle cx="458.8" cy="35.2" r="2.2"/><circle cx="458.8" cy="43.4" r="2.2"/><circle cx="467.9" cy="35.2" r="2.2"/><circle cx="467.9" cy="43.4" r="2.2"/><circle cx="477.0" cy="35.2" r="2.2"/><circle cx="477.0" cy="43.4" r="2.2"/><circle cx="486.1" cy="35.2" r="2.2"/><circle cx="486.1" cy="43.4" r="2.2"/><circle cx="495.2" cy="35.2" r="2.2"/><circle cx="495.2" cy="43.4" r="2.2"/><circle cx="513.0" cy="35.3" r="2.2"/><circle cx="513.0" cy="43.4" r="2.2"/><circle cx="522.0" cy="35.3" r="2.2"/><circle cx="522.0" cy="43.4" r="2.2"/><circle cx="531.1" cy="35.3" r="2.2"/><circle cx="531.1" cy="43.4" r="2.2"/><circle cx="540.1" cy="35.3" r="2.2"/><circle cx="540.1" cy="43.4" r="2.2"/><circle cx="549.2" cy="35.3" r="2.2"/><circle cx="549.2" cy="43.4" r="2.2"/><circle cx="558.2" cy="35.3" r="2.2"/><circle cx="558.2" cy="43.4" r="2.2"/><circle cx="567.3" cy="35.3" r="2.2"/><circle cx="567.3" cy="43.4" r="2.2"/><circle cx="576.4" cy="35.3" r="2.2"/><circle cx="576.4" cy="43.4" r="2.2"/><circle cx="585.4" cy="35.3" r="2.2"/><circle cx="585.4" cy="43.4" r="2.2"/><circle cx="594.5" cy="35.3" r="2.2"/><circle cx="594.5" cy="43.4" r="2.2"/><circle cx="603.5" cy="35.3" r="2.2"/><circle cx="603.5" cy="43.4" r="2.2"/><circle cx="612.5" cy="35.3" r="2.2"/><circle cx="612.5" cy="43.4" r="2.2"/><circle cx="621.6" cy="35.3" r="2.2"/><circle cx="621.6" cy="43.4" r="2.2"/><circle cx="630.6" cy="35.3" r="2.2"/><circle cx="630.6" cy="43.4" r="2.2"/><circle cx="639.7" cy="35.3" r="2.2"/><circle cx="639.7" cy="43.4" r="2.2"/><circle cx="648.8" cy="35.3" r="2.2"/><circle cx="648.8" cy="43.4" r="2.2"/><circle cx="657.8" cy="35.3" r="2.2"/><circle cx="657.8" cy="43.4" r="2.2"/><circle cx="666.9" cy="35.3" r="2.2"/><circle cx="666.9" cy="43.4" r="2.2"/><circle cx="675.9" cy="35.3" r="2.2"/><circle cx="675.9" cy="43.4" r="2.2"/><circle cx="685.0" cy="35.3" r="2.2"/><circle cx="685.0" cy="43.4" r="2.2"/><circle cx="751.0" cy="36.3" r="2.4"/><circle cx="760.0" cy="36.3" r="2.4"/><circle cx="751.0" cy="44.2" r="2.4"/><circle cx="760.0" cy="44.2" r="2.4"/><circle cx="751.0" cy="52.2" r="2.4"/><circle cx="760.0" cy="52.2" r="2.4"/><circle cx="751.0" cy="60.1" r="2.4"/><circle cx="760.0" cy="60.1" r="2.4"/><circle cx="751.0" cy="68.1" r="2.4"/><circle cx="760.0" cy="68.1" r="2.4"/><circle cx="751.0" cy="76.0" r="2.4"/><circle cx="760.0" cy="76.0" r="2.4"/><circle cx="751.0" cy="84.0" r="2.4"/><circle cx="760.0" cy="84.0" r="2.4"/><circle cx="751.0" cy="91.9" r="2.4"/><circle cx="760.0" cy="91.9" r="2.4"/><circle cx="751.0" cy="99.9" r="2.4"/><circle cx="760.0" cy="99.9" r="2.4"/><circle cx="751.0" cy="107.8" r="2.4"/><circle cx="760.0" cy="107.8" r="2.4"/><circle cx="751.0" cy="115.8" r="2.4"/><circle cx="760.0" cy="115.8" r="2.4"/></g><rect x="419" y="34" width="5" height="5" fill="#fff"/><rect x="493" y="32.5" width="6" height="6" fill="#fff"/><rect x="682" y="32.5" width="6" height="6" fill="#fff"/><g fill="#ffff00" font-family="Liberation Sans" font-weight="bold" font-size="4.5"><text x="436" y="33">TP1</text><text x="444.5" y="40.5">TP8</text><text x="690" y="33">TP1</text><text x="734" y="37.5">TP8</text></g></g></svg>
  <!-- window frame -->
  <div class="p" style="left:42px;top:117px;width:779px;height:540px;background:linear-gradient(90deg,#0010d0 0px,#0848e0 1px,#1a6cf0 2px,#1a6cf0 4px,#0a50e0 5px,#0a50e0 6px,transparent 6px,transparent 773px,#0a5cf6 773px,#0a58f0 774px,#0850ea 775px,#0644d8 776px,#0434b8 777px,#022090 778px);border-radius:7px 7px 0 0;"></div>
  <div class="p" style="left:42px;top:117px;width:779px;height:37px;border-radius:7px 7px 0 0;background:linear-gradient(180deg,#2f86ff 0px,#4a9cff 1.5px,#3a90ff 3px,#1a74f4 5px,#0860ea 7px,#0054e3 10px,#0054e3 18px,#0058ea 24px,#0062f6 28px,#0068ff 32px,#0062f4 33.5px,#0050d8 35px,#0040b8 36px,#0038a8 37px);"></div>
  <div class="p" style="left:78px;top:129.5px;font-family:'Liberation Serif',serif;font-weight:bold;font-size:16px;line-height:1;color:#fff;-webkit-text-stroke:0.35px #fff;text-shadow:1px 1px 0 #0a1a8a;white-space:nowrap;will-change:transform"><span style="display:inline-block;width:11px;text-align:center;transform:scaleX(1.0)">M</span><span style="display:inline-block;width:11px;text-align:center;transform:scaleX(1.3)">a</span><span style="display:inline-block;width:11px;text-align:center;transform:scaleX(1.3)">t</span><span style="display:inline-block;width:11px;text-align:center;transform:scaleX(1.3)">c</span><span style="display:inline-block;width:11px;text-align:center;transform:scaleX(1.3)">h</span><span style="display:inline-block;width:11px;text-align:center;transform:scaleX(1.3)">&nbsp;</span><span style="display:inline-block;width:11px;text-align:center;transform:scaleX(1.3)">C</span><span style="display:inline-block;width:11px;text-align:center;transform:scaleX(1.3)">o</span><span style="display:inline-block;width:11px;text-align:center;transform:scaleX(1.0)">m</span><span style="display:inline-block;width:11px;text-align:center;transform:scaleX(1.3)">p</span><span style="display:inline-block;width:11px;text-align:center;transform:scaleX(1.3)">o</span><span style="display:inline-block;width:11px;text-align:center;transform:scaleX(1.3)">n</span><span style="display:inline-block;width:11px;text-align:center;transform:scaleX(1.3)">e</span><span style="display:inline-block;width:11px;text-align:center;transform:scaleX(1.3)">n</span><span style="display:inline-block;width:11px;text-align:center;transform:scaleX(1.3)">t</span></div>
  <div class="p" style="left:815px;top:121px;width:6px;height:33px;background:linear-gradient(90deg,rgba(0,20,120,0) 0px,rgba(0,20,120,0.15) 2px,rgba(0,16,100,0.5) 4px,rgba(0,10,80,0.8) 6px);"></div>
  <!-- icon -->
  <div class="p" style="left:50px;top:127px;width:22px;height:19px;background:#fff;"></div>
  <svg class="p" style="left:50px;top:127px" width="22" height="19" viewBox="0 0 22 19">
    <path d="M1.5 12 Q3 17 8 18 L1.5 18Z M20.5 12 Q19 17 14 18 L20.5 18Z M17 1.5 Q20.5 3 21 7 L21 1.5Z" fill="#eeb050" opacity="0.85"/>
    <circle cx="10.3" cy="8.7" r="7.6" fill="#eca840"/>
    <path d="M3 9 Q5 7 7 9 T11 9 T15 9 T19 9" stroke="#6e5a30" stroke-width="2.2" fill="none" opacity="0.75"/>
    <path d="M9.5 5.5 v2 M13.5 5.5 v2" stroke="#5a4a28" stroke-width="1.1"/>
  </svg>
  <!-- title buttons -->
  <div class="p tb" style="left:719px;top:124px;width:29px;height:26px;background:radial-gradient(circle at 20% 15%,#7aa4f8 0,#3c78ee 35%,#2a5ee0 70%,#2050d0 100%);"><div class="p" style="left:7px;top:16px;width:10px;height:4px;background:#fff"></div></div>
  <div class="p tb" style="left:751px;top:124px;width:29px;height:26px;border-color:rgba(255,255,255,0.45);background:radial-gradient(circle at 20% 15%,#5a88f0 0,#3a6ae6 40%,#2a56d8 100%);"><div class="p" style="left:6px;top:6px;width:12px;height:10px;border:2px solid #94a2ee;border-top-width:4px;"></div></div>
  <div class="p tb" style="left:783px;top:124px;width:29px;height:26px;background:radial-gradient(circle at 20% 15%,#f0a080 0,#e26a44 35%,#d84c20 75%,#c83c10 100%);">
    <svg class="p" style="left:0;top:0" width="27" height="24" viewBox="0 0 27 24"><path d="M7.5 6.5 L20 19 M20 6.5 L7.5 19" stroke="#fff" stroke-width="2.6" stroke-linecap="square"/></svg></div>
  <!-- client -->
  <div class="p" style="left:48px;top:154px;width:767px;height:500px;background:#ece9d8"></div>
  <div class="p" style="left:48px;top:160px;width:765px;height:500px;border-top:1px solid #aca899;border-left:1px solid #aca899;border-right:1px solid #fff;"></div>
  <div class="p" style="left:49px;top:161px;width:763px;height:500px;border-top:1px solid #fff;border-left:1px solid #fff;border-right:1px solid #aca899;"></div>
  <div class="p" style="left:812px;top:162px;width:1px;height:500px;background:#d2cebd"></div>
  <!-- labels -->
  <div class="t" style="left:178.5px;top:184px;font-size:15.6px;transform:scaleX(0.95);">Cache Compoent</div>
  <div class="t" style="left:584.5px;top:187px;font-size:15.6px;transform:scaleX(0.95);">Source Component</div>
  <!-- listview -->
  <div class="p" style="left:107px;top:210px;width:341px;height:379px;background:#fff;border-style:solid;border-width:2px;border-color:#aca899 #fff #fff #aca899;"></div>
  <div class="p" style="left:108px;top:211px;width:341px;height:379px;border-style:solid;border-width:1px;border-color:#716f64 #f1efe2 #f1efe2 #716f64;"></div>
  <div class="p" style="left:109px;top:212px;width:340px;height:21px;background:#ece9d8"></div>
  <div class="p" style="left:109px;top:232px;width:340px;height:1px;background:#716f64"></div>
  <div class="p" style="left:109px;top:231px;width:340px;height:1px;background:#aca899"></div>
  <div class="p" style="left:109px;top:212px;width:340px;height:1px;background:#fff"></div>
  <div class="p" style="left:109px;top:212px;width:1px;height:19px;background:#fff"></div>
  <div class="p" style="left:204px;top:213px;width:1px;height:18px;background:#aca899"></div>
  <div class="p" style="left:205px;top:212px;width:1px;height:20px;background:#716f64"></div>
  <div class="p" style="left:206px;top:213px;width:1px;height:18px;background:#fff"></div>
  <div class="p" style="left:322px;top:213px;width:1px;height:18px;background:#aca899"></div>
  <div class="p" style="left:323px;top:212px;width:1px;height:20px;background:#716f64"></div>
  <div class="p" style="left:324px;top:213px;width:1px;height:18px;background:#fff"></div>
  <div class="p" style="left:447px;top:213px;width:1px;height:18px;background:#aca899"></div>
  <div class="p" style="left:448px;top:212px;width:1px;height:20px;background:#716f64"></div>
  <div class="t" style="left:118px;top:215.5px;font-size:15.6px;transform:scaleX(0.93);">Component</div>
  <div class="t" style="left:215.5px;top:215.5px;font-size:15.6px;transform:scaleX(0.93);">Old Designator</div>
  <div class="t" style="left:333.5px;top:215.5px;font-size:15.6px;transform:scaleX(0.93);">New Designator</div>
  <div class="t" style="left:115.5px;top:236.8px;font-size:15.6px;transform:scaleX(0.93);">Component</div>
  <div class="t" style="left:214.8px;top:236.8px;font-size:15.6px;transform:scaleX(0.93);">U1</div>
  <div class="t" style="left:332.8px;top:236.8px;font-size:15.6px;transform:scaleX(0.93);">U1</div>
  <div class="t" style="left:115.5px;top:254.05px;font-size:15.6px;transform:scaleX(0.93);">Component</div>
  <div class="t" style="left:214.8px;top:254.05px;font-size:15.6px;transform:scaleX(0.93);">JP7</div>
  <div class="t" style="left:332.8px;top:254.05px;font-size:15.6px;transform:scaleX(0.93);">JP7</div>
  <div class="t" style="left:115.5px;top:271.3px;font-size:15.6px;transform:scaleX(0.93);">Component</div>
  <div class="t" style="left:214.8px;top:271.3px;font-size:15.6px;transform:scaleX(0.93);">JP1</div>
  <div class="t" style="left:332.8px;top:271.3px;font-size:15.6px;transform:scaleX(0.93);">JP1</div>
  <div class="t" style="left:115.5px;top:288.55px;font-size:15.6px;transform:scaleX(0.93);">Component</div>
  <div class="t" style="left:214.8px;top:288.55px;font-size:15.6px;transform:scaleX(0.93);">JP2</div>
  <div class="t" style="left:332.8px;top:288.55px;font-size:15.6px;transform:scaleX(0.93);">JP2</div>
  <div class="t" style="left:115.5px;top:305.8px;font-size:15.6px;transform:scaleX(0.93);">Component</div>
  <div class="t" style="left:214.8px;top:305.8px;font-size:15.6px;transform:scaleX(0.93);">JP3</div>
  <div class="t" style="left:332.8px;top:305.8px;font-size:15.6px;transform:scaleX(0.93);">JP3</div>
  <div class="t" style="left:115.5px;top:323.05px;font-size:15.6px;transform:scaleX(0.93);">Component</div>
  <div class="t" style="left:214.8px;top:323.05px;font-size:15.6px;transform:scaleX(0.93);">JP5</div>
  <div class="t" style="left:332.8px;top:323.05px;font-size:15.6px;transform:scaleX(0.93);">JP5</div>
  <div class="t" style="left:115.5px;top:340.3px;font-size:15.6px;transform:scaleX(0.93);">Component</div>
  <div class="t" style="left:214.8px;top:340.3px;font-size:15.6px;transform:scaleX(0.93);">JP6</div>
  <div class="t" style="left:332.8px;top:340.3px;font-size:15.6px;transform:scaleX(0.93);">JP6</div>
  <div class="t" style="left:115.5px;top:357.55px;font-size:15.6px;transform:scaleX(0.93);">Component</div>
  <div class="t" style="left:214.8px;top:357.55px;font-size:15.6px;transform:scaleX(0.93);">JP8</div>
  <div class="t" style="left:332.8px;top:357.55px;font-size:15.6px;transform:scaleX(0.93);">JP8</div>
  <div class="t" style="left:115.5px;top:374.8px;font-size:15.6px;transform:scaleX(0.93);">Component</div>
  <div class="t" style="left:214.8px;top:374.8px;font-size:15.6px;transform:scaleX(0.93);">JP4</div>
  <div class="t" style="left:332.8px;top:374.8px;font-size:15.6px;transform:scaleX(0.93);">JP4</div>
  <!-- source list -->
  <div class="p" style="left:559px;top:212px;width:180px;height:377px;background:#fff;border-style:solid;border-width:2px;border-color:#aca899 #fff #fff #aca899;"></div>
  <div class="p" style="left:560px;top:213px;width:180px;height:377px;border-style:solid;border-width:1px;border-color:#716f64 #f1efe2 #f1efe2 #716f64;"></div>
  <!-- buttons -->
  <div class="p btn def" style="left:462px;top:291px;width:81px;height:31px;"><div class="foc" style="left:4px;top:4px;width:72px;height:23px"></div></div>
  <div class="t" style="left:480.5px;top:298.5px;font-size:15.6px;transform:scaleX(0.95);">Assign</div>
  <div class="p btn" style="left:462px;top:457px;width:79px;height:31px;"></div>
  <div class="t" style="left:470px;top:464.5px;font-size:15.6px;transform:scaleX(0.975);">UnAssign</div>
  <div class="p btn" style="left:570px;top:609px;width:89px;height:28px;"></div>
  <div class="t" style="left:605px;top:614.5px;font-size:15.6px;transform:scaleX(1.0);">Ok</div>
  <div class="p btn" style="left:686px;top:609px;width:90px;height:28px;"></div>
  <div class="t" style="left:707px;top:615.5px;font-size:15.6px;transform:scaleX(0.99);">Cancel</div>
 </div>
</div>
</body></html>
